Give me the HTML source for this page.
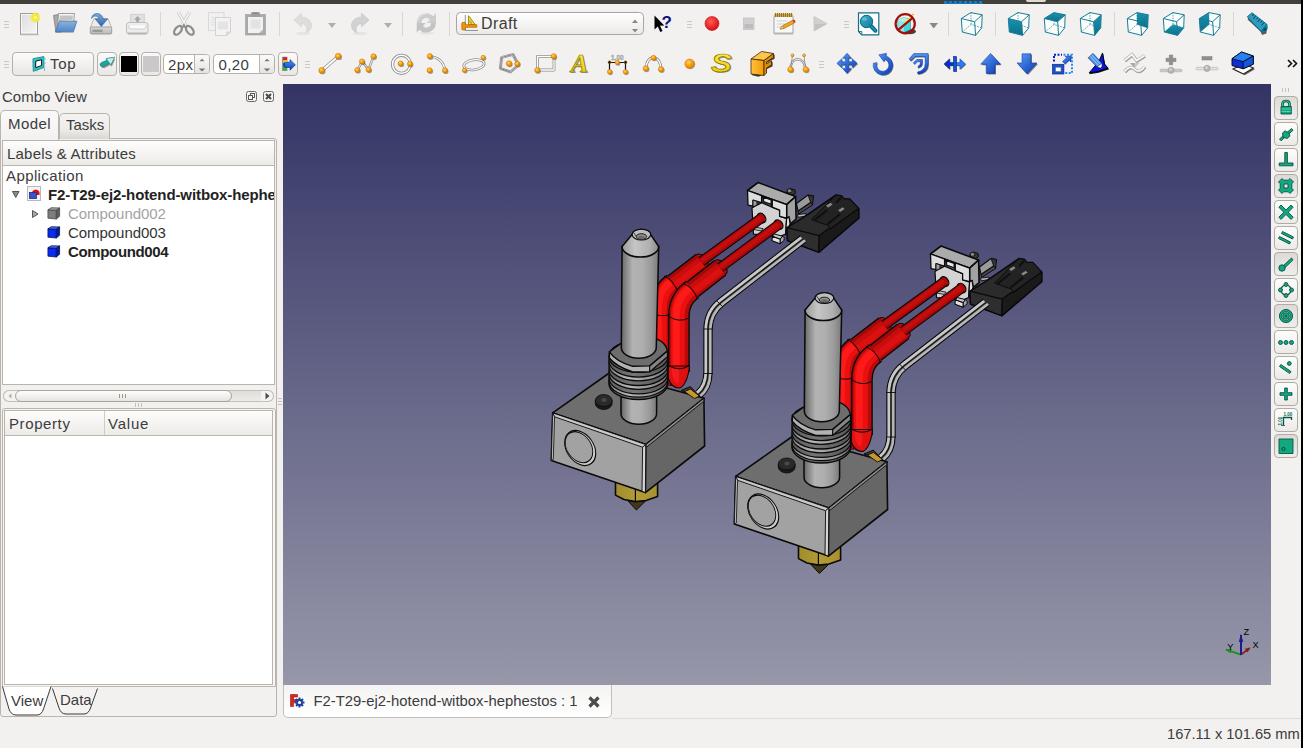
<!DOCTYPE html>
<html lang="en">
<head>
<meta charset="utf-8">
<title>FreeCAD</title>
<style>
html,body{margin:0;padding:0;}
body{width:1303px;height:748px;overflow:hidden;background:#f2f1f0;font-family:"Liberation Sans","DejaVu Sans",sans-serif;font-size:15px;color:#3c3c3c;}
#app{position:relative;width:1303px;height:748px;overflow:hidden;background:#f2f1f0;}
.abs{position:absolute;}
.topbar{left:0;top:0;width:1303px;height:4px;background:#42403b;}
.rightedge{left:1301px;top:0;width:2px;height:748px;background:#000;}
.handle{position:absolute;width:5px;height:9px;background:repeating-linear-gradient(to bottom,#c9c6c1 0,#c9c6c1 1px,transparent 1px,transparent 3px);}
.vsep{position:absolute;width:1px;height:24px;background:#d6d3cf;}
.ico{position:absolute;width:32px;height:32px;overflow:visible;}
.btn{position:absolute;box-sizing:border-box;border:1px solid #b5b0a9;border-radius:4px;background:linear-gradient(#fcfbfb,#e9e7e4);}
.txt{position:absolute;white-space:nowrap;line-height:1;}
</style>
</head>
<body>
<div id="app">
<div class="abs topbar"></div>
<div class="abs" style="left:944px;top:1px;width:39px;height:2px;background:repeating-linear-gradient(to right,#0b7fd0 0,#0b7fd0 3px,#2a4a66 3px,#2a4a66 5px);"></div><div class="abs" style="left:944px;top:3px;width:39px;height:1px;background:#0b86dc;opacity:0.800;"></div>
<div class="abs" style="left:1026px;top:0;width:20px;height:2px;background:#dedad2;border-radius:0 0 2px 2px;"></div>
<!-- ===== toolbar row 1 ===== -->
<svg class="abs" style="left:0;top:0" width="1303" height="46" viewBox="0 0 1303 46">
<defs>
<linearGradient id="gPaper" x1="0" y1="0" x2="1" y2="1"><stop offset="0" stop-color="#dcdcdc"/><stop offset="1" stop-color="#f6f6f6"/></linearGradient>
<radialGradient id="gGlow"><stop offset="0" stop-color="#fffbd0"/><stop offset="0.350" stop-color="#f6ea2e"/><stop offset="0.750" stop-color="#f3e84a" stop-opacity="0.850"/><stop offset="1" stop-color="#f3e84a" stop-opacity="0"/></radialGradient>
<linearGradient id="gFolder" x1="0" y1="0" x2="0" y2="1"><stop offset="0" stop-color="#8db2dc"/><stop offset="1" stop-color="#4f86c6"/></linearGradient>
<linearGradient id="gSaveArrow" x1="0" y1="0" x2="0" y2="1"><stop offset="0" stop-color="#7fa8d8"/><stop offset="1" stop-color="#2f66b0"/></linearGradient>
<linearGradient id="gDrive" x1="0" y1="0" x2="0" y2="1"><stop offset="0" stop-color="#dcdcdc"/><stop offset="1" stop-color="#b4b4b4"/></linearGradient>
<linearGradient id="gCombo" x1="0" y1="0" x2="0" y2="1"><stop offset="0" stop-color="#ffffff"/><stop offset="1" stop-color="#ebe9e7"/></linearGradient>
<radialGradient id="gRed" cx="0.400" cy="0.350" r="0.700"><stop offset="0" stop-color="#ff5a5a"/><stop offset="1" stop-color="#d40c0c"/></radialGradient>
<linearGradient id="gTeal" x1="0" y1="0" x2="1" y2="1"><stop offset="0" stop-color="#3fb0c8"/><stop offset="1" stop-color="#0f7d98"/></linearGradient>
<linearGradient id="gTeal2" x1="0" y1="0" x2="0" y2="1"><stop offset="0" stop-color="#1a93af"/><stop offset="1" stop-color="#0a6f8a"/></linearGradient>
</defs>
<g stroke="#cbc8c3" stroke-width="1"><path d="M4 21.5 h5 M4 24.5 h5 M4 27.5 h5"/></g>
<g transform="translate(17,12)">
<rect x="3" y="22" width="19" height="1.5" fill="#000" opacity="0.120"/>
<rect x="3.500" y="1.500" width="17" height="20.500" fill="url(#gPaper)" stroke="#9b9b9b"/>
<rect x="4.500" y="2.500" width="15" height="18.500" fill="none" stroke="#fff" stroke-opacity="0.700"/>
<circle cx="18.300" cy="5.600" r="5.600" fill="url(#gGlow)"/>
</g>
<g transform="translate(53,12)">
<path d="M0.500 3.500 L5 2.500 L8 20 L3 20 Z" fill="#a9a9a9" stroke="#7d7d7d" stroke-width="0.800"/>
<path d="M5.500 1.500 L21.500 1.500 L20.500 11 L4.500 18 Z" fill="#f4f4f4" stroke="#8a8a8a" stroke-width="0.800"/>
<path d="M7 3.500 L20 3.500 L19.500 8 L6 9 Z" fill="#c4c4c4"/>
<path d="M2.300 19.800 L6.500 9.200 L23.800 9.200 L20.400 19.800 Z" fill="url(#gFolder)" stroke="#3d72b0" stroke-width="0.800"/>
<rect x="2" y="20" width="19" height="1" fill="#000" opacity="0.120"/>
</g>
<g transform="translate(89,12)">
<path d="M1.500 15.500 L5 6.500 L19 6.500 L22.500 15.500 Z" fill="#ededed" stroke="#aaa" stroke-width="0.800"/>
<rect x="1.300" y="15" width="21.400" height="7" rx="1.200" fill="url(#gDrive)" stroke="#8f8f8f" stroke-width="0.800"/>
<rect x="3.500" y="17.500" width="10" height="2.500" fill="#9a9a9a"/>
<path d="M15.500 17 v4 M17.500 17 v4 M19.500 17 v4" stroke="#c9c9c9" stroke-width="1"/>
<path d="M2.500 6.500 C3 0.500 12 -1 14.500 7 L18.500 7 L12.300 14.500 L6.200 7 L10 7 C9 3.500 5 3 2.500 6.500 Z" fill="url(#gSaveArrow)" stroke="#2c62aa" stroke-width="0.600"/>
</g>
<g transform="translate(125,12)">
<rect x="5.700" y="2.300" width="13.500" height="9.500" fill="#e1e1e1" stroke="#c9c9c9" stroke-width="0.800"/>
<path d="M12.500 4 L15.800 7.800 L13.800 7.800 L13.800 10.200 L11.200 10.200 L11.200 7.800 L9.200 7.800 Z" fill="#a5a5a5"/>
<rect x="1.500" y="10.500" width="21.500" height="11.500" rx="2.500" fill="#ececec" stroke="#b8b8b8" stroke-width="0.900"/>
<path d="M3.500 13.500 Q3.500 17 6 17 L18.500 17 Q21 17 21 13.500" fill="#fbfbfb" stroke="#c5c5c5" stroke-width="0.800"/>
<rect x="2.500" y="20.500" width="19.500" height="1.800" rx="0.900" fill="#b3b3b3"/>
</g>
<rect x="160" y="12" width="1" height="24" fill="#dad7d3"/>
<g transform="translate(172,12)">
<path d="M6.300 0.400 L14.800 15 M17.500 0.400 L9 15" stroke="#c9c9c9" stroke-width="3.200" fill="none"/>
<path d="M6.300 0.400 L14.800 15 M17.500 0.400 L9 15" stroke="#f3f3f3" stroke-width="1.700" fill="none"/>
<ellipse cx="6" cy="18.300" rx="3" ry="5" transform="rotate(38 6 18.300)" fill="none" stroke="#8e8e8e" stroke-width="2.300"/>
<ellipse cx="17.800" cy="18.300" rx="3" ry="5" transform="rotate(-38 17.800 18.300)" fill="none" stroke="#8e8e8e" stroke-width="2.300"/>
<path d="M10.500 13.500 L11.900 11 L13.300 13.500 L15.500 17 L11.900 15.500 L8.300 17 Z" fill="#8e8e8e"/>
</g>
<g transform="translate(208,12)">
<rect x="0.500" y="0.500" width="15.500" height="18" fill="#f0f0f0" stroke="#dadada"/>
<path d="M3 5.500 h8 M3 8 h8 M3 10.500 h8 M3 13 h8" stroke="#e2e2e2" stroke-width="1"/>
<path d="M7.500 5.500 L22.500 5.500 L22.500 20 L18.500 23.500 L7.500 23.500 Z" fill="#f3f3f3" stroke="#d2d2d2"/>
<rect x="10" y="9.500" width="10" height="8" fill="#e4e4e4"/>
<path d="M22.500 20 L18.500 20 L18.500 23.500 Z" fill="#e0e0e0" stroke="#d0d0d0" stroke-width="0.700"/>
</g>
<g transform="translate(244,12)">
<rect x="1.500" y="2.500" width="20" height="20.500" fill="#a9a9a9" stroke="#9d9d9d" stroke-width="0.600"/>
<rect x="4" y="5" width="15" height="16" fill="#f1f1f1"/>
<rect x="7" y="0.300" width="9" height="4.700" rx="1" fill="#9e9e9e"/>
<rect x="8.500" y="0.300" width="6" height="1.500" fill="#8a8a8a"/>
<rect x="6.500" y="7.500" width="10" height="9" fill="#e3e3e3"/>
<path d="M19 17.500 L19 21 L15 21 Z" fill="#b5b5b5"/>
</g>
<rect x="279" y="12" width="1" height="24" fill="#dad7d3"/>
<g transform="translate(291,12)">
<ellipse cx="12" cy="21.500" rx="7" ry="1.800" fill="#000" opacity="0.050"/>
<path d="M3 8 L10.500 1.200 L10.500 5.200 C17 5.200 20.500 9 20.500 13.500 C20.500 17.500 17.500 20 15 20.500 C16.500 18.500 16.500 11.800 10.500 11.500 L10.500 14.800 Z" fill="#dddddd" stroke="#d2d2d2" stroke-width="0.700"/>
</g>
<path d="M328 23 h8 l-4 5 z" fill="#b3ada8"/>
<g transform="translate(348,12)">
<ellipse cx="12" cy="21.500" rx="7" ry="1.800" fill="#000" opacity="0.050"/>
<path d="M21 8 L13.500 1.200 L13.500 5.200 C7 5.200 3.500 9 3.500 13.500 C3.500 17.500 6.500 20 9 20.500 C7.500 18.500 7.500 11.800 13.500 11.500 L13.500 14.800 Z" fill="#d2d2d2" stroke="#c6c6c6" stroke-width="0.700"/>
</g>
<path d="M384 23 h8 l-4 5 z" fill="#b3ada8"/>
<rect x="402" y="12" width="1" height="24" fill="#dad7d3"/>
<g transform="translate(414,12)">
<ellipse cx="12.500" cy="21.300" rx="8" ry="1.500" fill="#000" opacity="0.050"/>
<path d="M5.200 11.300 A7.100 7.100 0 0 1 18.100 6.700" fill="none" stroke="#cdcdcd" stroke-width="4.800"/>
<path d="M22 1.200 L22 11 L12.800 11 Z" fill="#cdcdcd"/>
<path d="M19.400 10.500 A7.100 7.100 0 0 1 6.500 15" fill="none" stroke="#c4c4c4" stroke-width="4.800"/>
<path d="M2.700 20.800 L2.700 11 L11.800 11 Z" fill="#c4c4c4"/>
<path d="M4.200 8.500 A8.500 8.500 0 0 1 13 2" fill="none" stroke="#e4e4e4" stroke-width="1"/>
</g>
<rect x="449" y="12" width="1" height="24" fill="#dad7d3"/>
<rect x="456.500" y="12.500" width="187" height="22" rx="4" fill="url(#gCombo)" stroke="#aaa69f"/>
<g transform="translate(461,14)">
<path d="M4.300 1 L4.300 16.500 L17 16.500" stroke="#8a8a8a" stroke-width="0.900" fill="none"/>
<path d="M7.500 1.700 L7.500 10.500 L14.200 10.500 Z" fill="#f0de3a" stroke="#9a8400" stroke-width="0.900" stroke-linejoin="round"/>
<path d="M9 6.500 L9 9.200 L11 9.200 Z" fill="#cfc9a0" stroke="#9a8400" stroke-width="0.500"/>
<path d="M1.800 8.400 Q0.800 8.400 0.800 9.400 L0.800 14.900 Q0.800 15.900 1.800 15.900 L4.300 15.900 L4.300 13.300 L15.800 13.300 L15.800 10.700 L4.300 10.700 L4.300 8.400 Z" fill="#f0950c" stroke="#b36200" stroke-width="0.700" stroke-linejoin="round"/>
</g>
<path d="M632 23 h6 l-3 -3.500 z M632 29 h6 l-3 3.500 z" fill="#8b8782"/>
<g transform="translate(651,12)">
<path d="M3.500 3.500 L3.500 17.500 L6.800 14.500 L9.300 20 L11.500 19 L9 13.700 L13.300 13.500 Z" fill="#000"/>
<text x="10.500" y="16" font-family="Liberation Sans, sans-serif" font-weight="bold" font-size="17" fill="#10107e">?</text>
</g>
<g stroke="#cbc8c3" stroke-width="1"><path d="M687 21.5 h5 M687 24.5 h5 M687 27.5 h5"/></g>
<circle cx="712" cy="23.500" r="7" fill="url(#gRed)" stroke="#c61010" stroke-width="0.600"/>
<rect x="743.500" y="18" width="10.500" height="11.500" fill="#d0d0d0" stroke="#c3c3c3" stroke-width="0.800"/><rect x="744.500" y="24" width="8.500" height="4.500" fill="#bcbcbc"/>
<g transform="translate(772,12)">
<rect x="2" y="3.500" width="19" height="18" rx="1" fill="#f7f7f7" stroke="#9a9a9a" stroke-width="0.900"/>
<rect x="1.500" y="20.500" width="20" height="2" rx="1" fill="#b4b4b4"/>
<rect x="2.500" y="1.500" width="18" height="3.500" fill="#c9a94a"/>
<path d="M3.500 1 v4 M5.500 1 v4 M7.500 1 v4 M9.500 1 v4 M11.500 1 v4 M13.500 1 v4 M15.500 1 v4 M17.500 1 v4 M19.500 1 v4" stroke="#8a6d1d" stroke-width="0.900"/>
<path d="M4.500 9 h11 M4.500 12 h9 M4.500 15 h5" stroke="#cfcfcf" stroke-width="1"/>
<path d="M8 17 L10.500 13.800 L20.500 8.300 L22.300 11 L12 16.500 Z" fill="#f0a51c" stroke="#b36e00" stroke-width="0.700"/>
<path d="M8 17 L10.500 13.800 L12 16.500 Z" fill="#f3d6a0" stroke="#9a6a20" stroke-width="0.500"/>
<path d="M20.500 8.300 L22 7.600 Q23.500 8.500 23.500 10.200 L22.300 11 Z" fill="#e03030"/>
</g>
<path d="M814 16.500 L827 23.700 L814 31 Z" fill="#d0d0d0" stroke="#c2c2c2" stroke-width="0.800"/><path d="M815 24 L826 24 L815 30 Z" fill="#c2c2c2"/>
<g stroke="#cbc8c3" stroke-width="1"><path d="M844 21.5 h5 M844 24.5 h5 M844 27.5 h5"/></g>
<g transform="translate(856,12)">
<path d="M2.500 0.800 L22.800 0.800 L22.800 22.800 L5.800 22.800 L2.500 19.500 Z" fill="#fdfdfd" stroke="#136f88" stroke-width="1.200" stroke-linejoin="round"/>
<path d="M2.500 19.500 L5.800 19.500 L5.800 22.800" fill="none" stroke="#136f88" stroke-width="0.900"/>
<path d="M15 14 L19.300 18.600" stroke="#0b6580" stroke-width="4.200" stroke-linecap="round"/>
<path d="M15.200 14.200 L19.200 18.500" stroke="#1a8fae" stroke-width="2.200" stroke-linecap="round"/>
<circle cx="10.500" cy="9.500" r="6.200" fill="url(#gTeal)" stroke="#0b6580" stroke-width="1"/>
<ellipse cx="8.600" cy="7" rx="2.600" ry="1.700" fill="#9fe0f0" opacity="0.450"/>
</g>
<g transform="translate(893,12)">
<ellipse cx="16.500" cy="19.500" rx="6.500" ry="2.800" fill="#222" opacity="0.850"/>
<path d="M4.500 8.500 L10.500 5.500 L17.500 7.500 L17.500 17.500 L11 20.500 L4.500 17.500 Z" fill="#3fd6dc" stroke="#1f9aa4" stroke-width="0.600"/>
<path d="M4.500 8.500 L10.500 5.500 L17.500 7.500 L11 10.800 Z" fill="#b4efee"/>
<path d="M4.500 8.500 L11 10.800 L11 20.500 L4.500 17.500 Z" fill="#8fe4e4"/>
<path d="M11.500 11 L18.800 4.800" stroke="#f3dc1a" stroke-width="1.700"/>
<circle cx="20" cy="2.600" r="0.900" fill="#f0a010"/>
<circle cx="12.200" cy="11.800" r="9.600" fill="none" stroke="#a50d0d" stroke-width="2.200"/>
<path d="M5 18.200 L19.500 6" stroke="#a50d0d" stroke-width="2.200"/>
</g>
<path d="M929.500 23 h8.500 l-4.250 5.500 z" fill="#8a8682"/>
<rect x="948" y="12" width="1" height="24" fill="#dad7d3"/>
<g transform="translate(960,12)" stroke-linejoin="round"><path d="M1.3 6.5 L10.9 0.6 L22.2 2.8 L21.7 15.9 L15.6 23.4 L2.3 20.0 Z" fill="#fbfdfd"/><path d="M10.9 0.6 L11.1 12.4 M2.3 20.0 L11.1 12.4 L21.7 15.9" stroke="#1a829c" stroke-width="0.800" stroke-dasharray="1.400 1.200" fill="none"/><path d="M1.3 6.5 L10.9 0.6 L22.2 2.8 L14.6 9.7 Z M1.3 6.5 L2.3 20.0 L15.6 23.4 L14.6 9.7 M15.6 23.4 L21.7 15.9 L22.2 2.8" stroke="#197d95" stroke-width="1" fill="none"/></g>
<rect x="995" y="12" width="1" height="24" fill="#dad7d3"/>
<g transform="translate(1007,12)" stroke-linejoin="round"><path d="M1.3 6.5 L10.9 0.6 L22.2 2.8 L21.7 15.9 L15.6 23.4 L2.3 20.0 Z" fill="#fbfdfd"/><path d="M1.3 6.5 L14.6 9.7 L15.6 23.4 L2.3 20.0 Z" fill="url(#gTeal2)"/><path d="M10.9 0.6 L11.1 12.4 M2.3 20.0 L11.1 12.4 L21.7 15.9" stroke="#1a829c" stroke-width="0.800" stroke-dasharray="1.400 1.200" fill="none"/><path d="M1.3 6.5 L10.9 0.6 L22.2 2.8 L14.6 9.7 Z M1.3 6.5 L2.3 20.0 L15.6 23.4 L14.6 9.7 M15.6 23.4 L21.7 15.9 L22.2 2.8" stroke="#197d95" stroke-width="1" fill="none"/></g>
<g transform="translate(1043,12)" stroke-linejoin="round"><path d="M1.3 6.5 L10.9 0.6 L22.2 2.8 L21.7 15.9 L15.6 23.4 L2.3 20.0 Z" fill="#fbfdfd"/><path d="M1.3 6.5 L10.9 0.6 L22.2 2.8 L14.6 9.7 Z" fill="url(#gTeal2)"/><path d="M10.9 0.6 L11.1 12.4 M2.3 20.0 L11.1 12.4 L21.7 15.9" stroke="#1a829c" stroke-width="0.800" stroke-dasharray="1.400 1.200" fill="none"/><path d="M1.3 6.5 L10.9 0.6 L22.2 2.8 L14.6 9.7 Z M1.3 6.5 L2.3 20.0 L15.6 23.4 L14.6 9.7 M15.6 23.4 L21.7 15.9 L22.2 2.8" stroke="#197d95" stroke-width="1" fill="none"/></g>
<g transform="translate(1079,12)" stroke-linejoin="round"><path d="M1.3 6.5 L10.9 0.6 L22.2 2.8 L21.7 15.9 L15.6 23.4 L2.3 20.0 Z" fill="#fbfdfd"/><path d="M14.6 9.7 L22.2 2.8 L21.7 15.9 L15.6 23.4 Z" fill="url(#gTeal2)"/><path d="M10.9 0.6 L11.1 12.4 M2.3 20.0 L11.1 12.4 L21.7 15.9" stroke="#1a829c" stroke-width="0.800" stroke-dasharray="1.400 1.200" fill="none"/><path d="M1.3 6.5 L10.9 0.6 L22.2 2.8 L14.6 9.7 Z M1.3 6.5 L2.3 20.0 L15.6 23.4 L14.6 9.7 M15.6 23.4 L21.7 15.9 L22.2 2.8" stroke="#197d95" stroke-width="1" fill="none"/></g>
<rect x="1114" y="12" width="1" height="24" fill="#dad7d3"/>
<g transform="translate(1126,12)" stroke-linejoin="round"><path d="M1.3 6.5 L10.9 0.6 L22.2 2.8 L21.7 15.9 L15.6 23.4 L2.3 20.0 Z" fill="#fbfdfd"/><path d="M10.9 0.6 L22.2 2.8 L21.7 15.9 L11.1 12.4 Z" fill="url(#gTeal2)"/><path d="M10.9 0.6 L11.1 12.4 M2.3 20.0 L11.1 12.4 L21.7 15.9" stroke="#1a829c" stroke-width="0.800" stroke-dasharray="1.400 1.200" fill="none"/><path d="M1.3 6.5 L10.9 0.6 L22.2 2.8 L14.6 9.7 Z M1.3 6.5 L2.3 20.0 L15.6 23.4 L14.6 9.7 M15.6 23.4 L21.7 15.9 L22.2 2.8" stroke="#197d95" stroke-width="1" fill="none"/></g>
<g transform="translate(1162,12)" stroke-linejoin="round"><path d="M1.3 6.5 L10.9 0.6 L22.2 2.8 L21.7 15.9 L15.6 23.4 L2.3 20.0 Z" fill="#fbfdfd"/><path d="M2.3 20.0 L11.1 12.4 L21.7 15.9 L15.6 23.4 Z" fill="url(#gTeal2)"/><path d="M10.9 0.6 L11.1 12.4 M2.3 20.0 L11.1 12.4 L21.7 15.9" stroke="#1a829c" stroke-width="0.800" stroke-dasharray="1.400 1.200" fill="none"/><path d="M1.3 6.5 L10.9 0.6 L22.2 2.8 L14.6 9.7 Z M1.3 6.5 L2.3 20.0 L15.6 23.4 L14.6 9.7 M15.6 23.4 L21.7 15.9 L22.2 2.8" stroke="#197d95" stroke-width="1" fill="none"/></g>
<g transform="translate(1198,12)" stroke-linejoin="round"><path d="M1.3 6.5 L10.9 0.6 L22.2 2.8 L21.7 15.9 L15.6 23.4 L2.3 20.0 Z" fill="#fbfdfd"/><path d="M1.3 6.5 L10.9 0.6 L11.1 12.4 L2.3 20.0 Z" fill="url(#gTeal2)"/><path d="M10.9 0.6 L11.1 12.4 M2.3 20.0 L11.1 12.4 L21.7 15.9" stroke="#1a829c" stroke-width="0.800" stroke-dasharray="1.400 1.200" fill="none"/><path d="M1.3 6.5 L10.9 0.6 L22.2 2.8 L14.6 9.7 Z M1.3 6.5 L2.3 20.0 L15.6 23.4 L14.6 9.7 M15.6 23.4 L21.7 15.9 L22.2 2.8" stroke="#197d95" stroke-width="1" fill="none"/></g>
<rect x="1233" y="12" width="1" height="24" fill="#dad7d3"/>
<g transform="translate(1245,12)">
<path d="M2.500 7.500 L15.500 19.500 L17 23 L21.500 21.500 L21.500 16 L4 5 Z" fill="#3a3a3a" opacity="0.800"/>
<path d="M2.300 4.800 L7 0.700 L21.800 12.300 L16.200 19.600 Z" fill="#2a9cc0" stroke="#0e6a88" stroke-width="0.900"/>
<path d="M21.800 12.300 Q23.600 16.500 20 20.800 L16.200 19.600 Z" fill="#1b86a6" stroke="#0e6a88" stroke-width="0.800"/>
<ellipse cx="19.800" cy="17.500" rx="1.300" ry="2" transform="rotate(35 19.800 17.500)" fill="#0a4c62"/>
<path d="M8.600 2.200 l-1.400 1.800 M10.700 3.800 l-2.300 3 M12.800 5.500 l-1.400 1.800 M14.900 7.100 l-2.300 3 M17 8.800 l-1.400 1.800 M19.100 10.400 l-2.300 3" stroke="#05384a" stroke-width="0.900"/>
</g>
</svg>
<div class="txt" style="left:481px;top:16px;font-size:16px;letter-spacing:0.400px;">Draft</div>
<!-- ===== toolbar row 2 ===== -->
<div class="btn" style="left:12px;top:52px;width:82px;height:24px;"></div>
<div class="txt" style="left:50px;top:56px;font-size:15px;letter-spacing:0.700px;">Top</div>
<div class="btn" style="left:97px;top:52px;width:20px;height:24px;"></div>
<div class="btn" style="left:119px;top:52px;width:20px;height:24px;"></div>
<div class="abs" style="left:121px;top:56px;width:16px;height:16px;background:#000;"></div>
<div class="btn" style="left:141px;top:52px;width:20px;height:24px;"></div>
<div class="abs" style="left:143px;top:56px;width:16px;height:16px;background:#c9c9c9;"></div>
<div class="abs" style="left:163px;top:54px;width:47px;height:20px;box-sizing:border-box;border:1px solid #b5b0a9;border-radius:4px;background:linear-gradient(to right,#fff 30px,#bab6af 30px,#bab6af 31px,#f7f6f5 31px);overflow:hidden;"><div class="abs" style="left:31px;top:0;width:14px;height:18px;background:linear-gradient(#fbfafa,#e6e4e1);"></div></div>
<div class="txt" style="left:168px;top:57px;font-size:15px;letter-spacing:0.400px;color:#3c3c3c;">2px</div>
<svg class="abs" style="left:194px;top:55px" width="16" height="18" viewBox="0 0 16 18"><path d="M5.5 6.300 h5 l-2.500 -2.600 z" fill="#77746f"/><path d="M4.8 13.400 h6.400 l-3.200 3 z" fill="#77746f"/></svg>
<div class="abs" style="left:213px;top:54px;width:62px;height:20px;box-sizing:border-box;border:1px solid #b5b0a9;border-radius:4px;background:linear-gradient(to right,#fff 45px,#bab6af 45px,#bab6af 46px,#f7f6f5 46px);overflow:hidden;"><div class="abs" style="left:46px;top:0;width:14px;height:18px;background:linear-gradient(#fbfafa,#e6e4e1);"></div></div>
<div class="txt" style="left:218.5px;top:57px;font-size:15px;letter-spacing:0.400px;color:#3c3c3c;">0,20</div>
<svg class="abs" style="left:259px;top:55px" width="16" height="18" viewBox="0 0 16 18"><path d="M5.5 6.300 h5 l-2.500 -2.600 z" fill="#77746f"/><path d="M4.8 13.400 h6.400 l-3.200 3 z" fill="#77746f"/></svg>
<div class="btn" style="left:278px;top:52px;width:20px;height:24px;"></div>
<svg class="abs" style="left:0;top:44px" width="1303" height="42" viewBox="0 44 1303 42">
<defs>
<radialGradient id="gOr" cx="0.400" cy="0.350" r="0.750"><stop offset="0" stop-color="#ffd070"/><stop offset="0.450" stop-color="#f9a30e"/><stop offset="1" stop-color="#c87400"/></radialGradient>
<linearGradient id="gBlue" x1="0" y1="0" x2="0" y2="1"><stop offset="0" stop-color="#4f96f0"/><stop offset="1" stop-color="#0a3fc0"/></linearGradient>
<linearGradient id="gBlue2" x1="0" y1="0" x2="1" y2="1"><stop offset="0" stop-color="#5aa0ff"/><stop offset="1" stop-color="#0838b0"/></linearGradient>
<linearGradient id="gYel" x1="0" y1="0" x2="0" y2="1"><stop offset="0" stop-color="#fff04a"/><stop offset="1" stop-color="#e8c800"/></linearGradient>
<linearGradient id="gOrBox" x1="0" y1="0" x2="1" y2="0"><stop offset="0" stop-color="#ffc23a"/><stop offset="1" stop-color="#f39a0a"/></linearGradient>
</defs>
<g stroke="#cbc8c3" stroke-width="1"><path d="M4 61.5 h5 M4 64.5 h5 M4 67.5 h5"/></g>
<g>
<path d="M33 58.700 L43.900 56.600 L43.900 67.500 L33.300 71.300 Z" fill="#35c3c8" stroke="#168a92" stroke-width="0.900"/>
<path d="M35.700 61.200 L41.600 59.700 L41.600 65.500 L35.700 67.700 Z" fill="#fff" stroke="#111" stroke-width="1"/>
<path d="M32 62 h2 M32 66 h2 M44.500 59 h1.500 M44.500 63 h1.500 M44.500 67.500 v3.500 M37 69.500 v2" stroke="#35b3b8" stroke-width="0.700"/>
</g>
<g>
<path d="M100.500 66.500 L102 63.500 L107.500 61.200 L106.500 59.300 L114.500 58.300 L111 65.800 L109.800 64 L103.500 67.300 Z" fill="#333" opacity="0.500" transform="translate(0.700,0.900)"/>
<path d="M100 65 Q99.600 63.500 101.500 62.500 L107 60.200 L106.300 58.600 L114.600 57.300 L110.800 64.800 L109.600 63.200 L103.500 66.300 Q101 67.200 100 65 Z" fill="#17a8a4" stroke="#0a7370" stroke-width="0.600"/>
<path d="M106.300 58.600 L114.600 57.300 L110.800 64.800 Z" fill="#c6efe8" stroke="#3a9a90" stroke-width="0.600"/>
</g>
<g>
<rect x="282.300" y="56.800" width="5" height="14" fill="#6e6e6e"/>
<rect x="283.300" y="57.600" width="3.600" height="2.600" fill="#ff1010"/>
<rect x="283.300" y="60.200" width="3.600" height="2.800" fill="#ffe610"/>
<rect x="283.300" y="63" width="3.600" height="3.400" fill="#1540e0"/>
<rect x="283.300" y="66.400" width="3.600" height="3.400" fill="#18d818"/>
<path d="M284.500 62.300 L290 62.300 L290 59.600 L295.400 64.900 L290 70.200 L290 67.500 L284.500 67.500 Z" fill="url(#gBlue)" stroke="#0a2c90" stroke-width="0.600"/>
</g>
<g stroke="#cbc8c3" stroke-width="1"><path d="M305 61.5 h5 M305 64.5 h5 M305 67.5 h5"/></g>
<g><path d="M322 70.500 L338 56.500" stroke="#8c8c8c" stroke-width="3.4" fill="none" stroke-linecap="round" stroke-linejoin="round"/><path d="M322 70.500 L338 56.500" stroke="#ffffff" stroke-width="1.9" fill="none" stroke-linecap="round" stroke-linejoin="round"/><circle cx="322.59999999999997" cy="71.4" r="2.9" fill="#555" opacity="0.550"/><circle cx="321.7" cy="70.4" r="2.9" fill="url(#gOr)" stroke="#c77a00" stroke-width="0.500"/><circle cx="339.09999999999997" cy="57.2" r="2.9" fill="#555" opacity="0.550"/><circle cx="338.2" cy="56.2" r="2.9" fill="url(#gOr)" stroke="#c77a00" stroke-width="0.500"/></g>
<g><path d="M357.500 70 L362 61.500 L368.500 69.500 L373.500 56.500" stroke="#8c8c8c" stroke-width="2.4" fill="none" stroke-linecap="round" stroke-linejoin="round"/><path d="M357.500 70 L362 61.500 L368.500 69.500 L373.500 56.500" stroke="#ffffff" stroke-width="0.8999999999999999" fill="none" stroke-linecap="round" stroke-linejoin="round"/><circle cx="358.2" cy="71.0" r="2.6" fill="#555" opacity="0.550"/><circle cx="357.3" cy="70" r="2.6" fill="url(#gOr)" stroke="#c77a00" stroke-width="0.500"/><circle cx="362.9" cy="62.5" r="2.6" fill="#555" opacity="0.550"/><circle cx="362" cy="61.5" r="2.6" fill="url(#gOr)" stroke="#c77a00" stroke-width="0.500"/><circle cx="369.4" cy="70.6" r="2.6" fill="#555" opacity="0.550"/><circle cx="368.5" cy="69.6" r="2.6" fill="url(#gOr)" stroke="#c77a00" stroke-width="0.500"/><circle cx="374.4" cy="57.3" r="2.6" fill="#555" opacity="0.550"/><circle cx="373.5" cy="56.3" r="2.6" fill="url(#gOr)" stroke="#c77a00" stroke-width="0.500"/></g>
<g><circle cx="401.500" cy="64.300" r="9" fill="none" stroke="#8f8f8f" stroke-width="3.200"/><circle cx="401.500" cy="64.300" r="9" fill="none" stroke="#fff" stroke-width="1.500"/><circle cx="401.5" cy="64.5" r="2.6" fill="#555" opacity="0.550"/><circle cx="400.6" cy="63.5" r="2.6" fill="url(#gOr)" stroke="#c77a00" stroke-width="0.500"/><circle cx="410.9" cy="64.8" r="2.6" fill="#555" opacity="0.550"/><circle cx="410" cy="63.8" r="2.6" fill="url(#gOr)" stroke="#c77a00" stroke-width="0.500"/></g>
<g><path d="M430 56.500 C438 57 444 62 445 70.500" stroke="#8c8c8c" stroke-width="2.6" fill="none" stroke-linecap="round" stroke-linejoin="round"/><path d="M430 56.500 C438 57 444 62 445 70.500" stroke="#ffffff" stroke-width="1.1" fill="none" stroke-linecap="round" stroke-linejoin="round"/><circle cx="430.7" cy="57.2" r="2.6" fill="#555" opacity="0.550"/><circle cx="429.8" cy="56.2" r="2.6" fill="url(#gOr)" stroke="#c77a00" stroke-width="0.500"/><circle cx="430.5" cy="71.3" r="2.6" fill="#555" opacity="0.550"/><circle cx="429.6" cy="70.3" r="2.6" fill="url(#gOr)" stroke="#c77a00" stroke-width="0.500"/><circle cx="445.9" cy="71.4" r="2.6" fill="#555" opacity="0.550"/><circle cx="445" cy="70.4" r="2.6" fill="url(#gOr)" stroke="#c77a00" stroke-width="0.500"/></g>
<g><ellipse cx="474" cy="64.800" rx="10.300" ry="5" transform="rotate(-8 474 64.800)" fill="none" stroke="#8c8c8c" stroke-width="2.600"/><ellipse cx="474" cy="64.800" rx="10.300" ry="5" transform="rotate(-8 474 64.800)" fill="none" stroke="#fff" stroke-width="1.100"/><circle cx="465.4" cy="71.3" r="2.2" fill="#555" opacity="0.550"/><circle cx="464.5" cy="70.3" r="2.2" fill="url(#gOr)" stroke="#c77a00" stroke-width="0.500"/><circle cx="484.09999999999997" cy="58.5" r="2.2" fill="#555" opacity="0.550"/><circle cx="483.2" cy="57.5" r="2.2" fill="url(#gOr)" stroke="#c77a00" stroke-width="0.500"/></g>
<g><path d="M501.500 57.500 L513 54.500 L518.500 65 L510.500 72 L500.500 68.500 Z" stroke="#8c8c8c" stroke-width="2.8" fill="none" stroke-linecap="round" stroke-linejoin="round"/><path d="M501.500 57.500 L513 54.500 L518.500 65 L510.500 72 L500.500 68.500 Z" stroke="#ffffff" stroke-width="1.2999999999999998" fill="none" stroke-linecap="round" stroke-linejoin="round"/><path d="M501.500 57.500 L513 54.500 L518.500 65 L510.500 72 L500.500 68.500 Z" fill="none" stroke="#444" stroke-width="0.700"/><circle cx="509.9" cy="64.5" r="2.8" fill="#555" opacity="0.550"/><circle cx="509" cy="63.5" r="2.8" fill="url(#gOr)" stroke="#c77a00" stroke-width="0.500"/><circle cx="518.1999999999999" cy="64.8" r="2.6" fill="#555" opacity="0.550"/><circle cx="517.3" cy="63.8" r="2.6" fill="url(#gOr)" stroke="#c77a00" stroke-width="0.500"/></g>
<g><path d="M537.500 70 L537.500 56.500 L554 56.500 L554 70 Z" stroke="#8c8c8c" stroke-width="2.8" fill="none" stroke-linecap="round" stroke-linejoin="round"/><path d="M537.500 70 L537.500 56.500 L554 56.500 L554 70 Z" stroke="#ffffff" stroke-width="1.2999999999999998" fill="none" stroke-linecap="round" stroke-linejoin="round"/><circle cx="538.1999999999999" cy="71.2" r="2.6" fill="#555" opacity="0.550"/><circle cx="537.3" cy="70.2" r="2.6" fill="url(#gOr)" stroke="#c77a00" stroke-width="0.500"/><circle cx="554.6" cy="57.3" r="2.6" fill="#555" opacity="0.550"/><circle cx="553.7" cy="56.3" r="2.6" fill="url(#gOr)" stroke="#c77a00" stroke-width="0.500"/></g>
<g><text x="571.800" y="73" font-family="Liberation Serif, serif" font-style="italic" font-weight="bold" font-size="26" fill="#555" opacity="0.600">A</text><text x="571" y="72" font-family="Liberation Serif, serif" font-style="italic" font-weight="bold" font-size="26" fill="url(#gYel)" stroke="#8a7400" stroke-width="0.700">A</text></g>
<g><path d="M609.500 62 L609.500 72 M625.500 62 L625.500 72 M609.500 62.500 L625.500 62.500" stroke="#111" stroke-width="1.200" fill="none"/><text x="611" y="59.500" font-family="Liberation Sans, sans-serif" font-weight="bold" font-size="6.500" fill="#fff" stroke="#999" stroke-width="0.500">1.00</text><circle cx="609.5" cy="62.2" r="1.5" fill="#111" stroke="#c77a00" stroke-width="0.500"/><circle cx="625.5" cy="62.2" r="1.5" fill="#111" stroke="#c77a00" stroke-width="0.500"/><circle cx="618.1999999999999" cy="63.5" r="2.3" fill="#555" opacity="0.550"/><circle cx="617.3" cy="62.5" r="2.3" fill="url(#gOr)" stroke="#c77a00" stroke-width="0.500"/><circle cx="610.6" cy="72.8" r="2.4" fill="#555" opacity="0.550"/><circle cx="609.7" cy="71.8" r="2.4" fill="url(#gOr)" stroke="#c77a00" stroke-width="0.500"/><circle cx="626.4" cy="72.8" r="2.4" fill="#555" opacity="0.550"/><circle cx="625.5" cy="71.8" r="2.4" fill="url(#gOr)" stroke="#c77a00" stroke-width="0.500"/></g>
<g><path d="M646 68.500 C646 54 661 54 661 69" stroke="#8c8c8c" stroke-width="2.8" fill="none" stroke-linecap="round" stroke-linejoin="round"/><path d="M646 68.500 C646 54 661 54 661 69" stroke="#ffffff" stroke-width="1.2999999999999998" fill="none" stroke-linecap="round" stroke-linejoin="round"/><circle cx="654.4" cy="58.8" r="2.5" fill="#555" opacity="0.550"/><circle cx="653.5" cy="57.8" r="2.5" fill="url(#gOr)" stroke="#c77a00" stroke-width="0.500"/><circle cx="646.6999999999999" cy="69.5" r="2.7" fill="#555" opacity="0.550"/><circle cx="645.8" cy="68.5" r="2.7" fill="url(#gOr)" stroke="#c77a00" stroke-width="0.500"/><circle cx="661.9" cy="70.3" r="2.7" fill="#555" opacity="0.550"/><circle cx="661" cy="69.3" r="2.7" fill="url(#gOr)" stroke="#c77a00" stroke-width="0.500"/></g>
<g><circle cx="690.600" cy="64.600" r="4.600" fill="#555" opacity="0.450"/><circle cx="689.600" cy="63.800" r="4.800" fill="url(#gOr)" stroke="#c77a00" stroke-width="0.500"/></g>
<g><text x="714.800" y="73" font-family="Liberation Sans, sans-serif" font-style="italic" font-weight="bold" font-size="25" fill="#555" opacity="0.600" transform="translate(726 64) scale(1.250 1) translate(-726 -64)">S</text><text x="714" y="72" font-family="Liberation Sans, sans-serif" font-style="italic" font-weight="bold" font-size="25" fill="url(#gYel)" stroke="#8a7400" stroke-width="0.700" transform="translate(726 64) scale(1.250 1) translate(-726 -64)">S</text></g>
<g>
<path d="M751.500 59.500 L762 52 L774 54 L774 58 L766 62 L766 63.500 L772 61 L772 65.500 L766 68.500 L766 72 L758 76 L751.500 74.500 Z" fill="#3a3a3a" transform="translate(0.600,0.700)"/>
<path d="M751 59 L761.500 51.500 L773.500 53.500 L764 60.500 Z" fill="#ffc44a" stroke="#3a2c08" stroke-width="0.800" stroke-linejoin="round"/>
<path d="M751 59 L764 60.500 L764 75.500 L751 74 Z" fill="url(#gOrBox)" stroke="#3a2c08" stroke-width="0.800" stroke-linejoin="round"/>
<path d="M764 60.500 L773.500 53.500 L773.500 57.500 L766.500 62 L766.500 63.800 L771.500 60.800 L771.500 65 L766.500 68 L766.500 73 L764 75.500 Z" fill="#e58a04" stroke="#3a2c08" stroke-width="0.800" stroke-linejoin="round"/>
</g>
<g><path d="M790.500 69 C790.500 56 804.500 56 805.500 69" stroke="#8c8c8c" stroke-width="2.4" fill="none" stroke-linecap="round" stroke-linejoin="round"/><path d="M790.500 69 C790.500 56 804.500 56 805.500 69" stroke="#ffffff" stroke-width="0.8999999999999999" fill="none" stroke-linecap="round" stroke-linejoin="round"/><path d="M790.500 69 L792.500 55.500 M805.500 69 L804 55.500" stroke="#777" stroke-width="0.700"/><circle cx="792.5" cy="55.3" r="1.5" fill="url(#gOr)" stroke="#c77a00" stroke-width="0.500"/><circle cx="804" cy="55.3" r="1.5" fill="url(#gOr)" stroke="#c77a00" stroke-width="0.500"/><circle cx="791.4" cy="70.5" r="2.8" fill="#555" opacity="0.550"/><circle cx="790.5" cy="69.5" r="2.8" fill="url(#gOr)" stroke="#c77a00" stroke-width="0.500"/><circle cx="806.6999999999999" cy="70.5" r="2.8" fill="#555" opacity="0.550"/><circle cx="805.8" cy="69.5" r="2.8" fill="url(#gOr)" stroke="#c77a00" stroke-width="0.500"/></g>
<g stroke="#cbc8c3" stroke-width="1"><path d="M819 61.5 h5 M819 64.5 h5 M819 67.5 h5"/></g>
<g><path d="M847 53.200 L851.500 58.200 L848.600 58.200 L848.600 61.700 L852.200 61.700 L852.200 58.800 L857.200 63.300 L852.200 67.800 L852.200 64.900 L848.600 64.900 L848.600 68.400 L851.500 68.400 L847 73.400 L842.500 68.400 L845.400 68.400 L845.400 64.900 L841.800 64.900 L841.800 67.800 L836.800 63.300 L841.800 58.800 L841.800 61.700 L845.400 61.700 L845.400 58.200 L842.500 58.200 Z" fill="#333" opacity="0.600" transform="translate(0.800,0.900)"/><path d="M847 53.200 L851.500 58.200 L848.600 58.200 L848.600 61.700 L852.200 61.700 L852.200 58.800 L857.200 63.300 L852.200 67.800 L852.200 64.900 L848.600 64.900 L848.600 68.400 L851.500 68.400 L847 73.400 L842.500 68.400 L845.400 68.400 L845.400 64.900 L841.800 64.900 L841.800 67.800 L836.800 63.300 L841.800 58.800 L841.800 61.700 L845.400 61.700 L845.400 58.200 L842.500 58.200 Z" fill="url(#gBlue2)" stroke="#1848b8" stroke-width="0.500"/></g>
<g><path d="M873.300 63.200 A9.800 9.800 0 1 0 885.500 55.700 L886.500 53.300 L878.800 54.800 L883.800 61.500 L884.600 59.200 A6.200 6.200 0 1 1 877 62.600 Z" fill="#333" opacity="0.600" transform="translate(0.800,0.900)"/><path d="M873.300 63.200 A9.800 9.800 0 1 0 885.500 55.700 L886.500 53.300 L878.800 54.800 L883.800 61.500 L884.600 59.200 A6.200 6.200 0 1 1 877 62.600 Z" fill="url(#gBlue2)" stroke="#1040b0" stroke-width="0.500"/></g>
<g><path d="M909.200 58.700 L913.800 53.600 L928.200 53.600 L928.200 64 Q928.200 72.500 918 74.200 L917.500 72 Q925.200 70.500 925.200 63.500 L925.200 56.600 L915 56.600 L910.800 61 Z" fill="#333" opacity="0.600" transform="translate(0.700,0.800)"/><path d="M909.200 58.700 L913.800 53.600 L928.200 53.600 L928.200 64 Q928.200 72.500 918 74.200 L917.500 72 Q925.200 70.500 925.200 63.500 L925.200 56.600 L915 56.600 L910.800 61 Z" fill="url(#gBlue)" stroke="#0a2a90" stroke-width="0.500"/><path d="M913.200 62.800 L916.800 59.500 L922.500 59.500 L922.500 63.500 Q922.500 67.300 918.500 68.300 L918 66.300 Q920.300 65.500 920.300 63.300 L920.300 61.700 L917.600 61.700 L914.800 64.500 Z" fill="url(#gBlue2)" stroke="#0a2a90" stroke-width="0.500"/></g>
<g><path d="M953.300 56.300 h3 v15 h-3 z M944 64 L949.600 58.800 L949.600 62.500 L953 62.500 L953 65.500 L949.600 65.500 L949.600 69.200 Z M965.500 64 L959.900 58.800 L959.900 62.500 L956.500 62.500 L956.500 65.500 L959.900 65.500 L959.900 69.200 Z" fill="#333" opacity="0.600" transform="translate(0.700,0.800)"/><path d="M944 64 L949.600 58.800 L949.600 62.500 L953.500 62.500 L953.500 65.500 L949.600 65.500 L949.600 69.200 Z" fill="#0a30c0" stroke="#06208a" stroke-width="0.500"/><path d="M965.500 64 L959.900 58.800 L959.900 62.500 L956 62.500 L956 65.500 L959.900 65.500 L959.900 69.200 Z" fill="#2a7cf0" stroke="#1040b0" stroke-width="0.500"/><rect x="953.300" y="56.300" width="3" height="15" fill="#1550d8" stroke="#0a2a90" stroke-width="0.500"/></g>
<g><path d="M990.600 53.400 L1000.600 64.200 L995 64.200 L995 73.400 L986.200 73.400 L986.200 64.200 L980.700 64.200 Z" fill="#333" opacity="0.600" transform="translate(1,1)"/><path d="M990.600 53.400 L1000.600 64.200 L995 64.200 L995 73.400 L986.200 73.400 L986.200 64.200 L980.700 64.200 Z" fill="url(#gBlue2)" stroke="#0a2a90" stroke-width="0.500"/></g>
<g><path d="M1027 73.900 L1037 62.900 L1031 62.900 L1031 53.800 L1022 53.800 L1022 62.900 L1017 62.900 Z" fill="#333" opacity="0.600" transform="translate(1,1)"/><path d="M1027 73.900 L1037 62.900 L1031 62.900 L1031 53.800 L1022 53.800 L1022 62.900 L1017 62.900 Z" fill="url(#gBlue2)" stroke="#0a2a90" stroke-width="0.500"/></g>
<g>
<path d="M1054 54.800 L1062 54.800" stroke="#0818d8" stroke-width="2" stroke-dasharray="2 1.500" fill="none"/>
<path d="M1054 56 L1054 62" stroke="#0818d8" stroke-width="2" stroke-dasharray="2 1.500" fill="none"/>
<path d="M1063.500 54.800 L1072 54.800 L1072 73 L1065 73" stroke="#2a8cf8" stroke-width="2" stroke-dasharray="2 1.500" fill="none"/>
<rect x="1052.600" y="64.300" width="11.300" height="9.700" fill="#1450d0" stroke="#0a2a90" stroke-width="0.700"/>
<rect x="1055.700" y="67.200" width="5.300" height="4.300" fill="#fff" stroke="#777" stroke-width="0.700"/>
<path d="M1062.500 61.500 L1066.500 57.800 L1065 56.300 L1071.300 55.800 L1070.800 62 L1069.300 60.500 L1065.300 64.200 Z" fill="url(#gBlue2)" stroke="#0a2a90" stroke-width="0.500"/>
</g>
<g>
<path d="M1102.500 53 L1099 61 L1095 66 L1088.500 73.500 L1098 72 L1108.500 68.500 L1104.500 64 Z" fill="#111" transform="translate(0.700,0.800)"/>
<path d="M1102.500 53 L1099 61 L1095 66 L1089 73 L1098 71.500 L1108 68 L1104.300 63.800 Z" fill="#0a10e8" stroke="#000" stroke-width="0.900"/>
<path d="M1088.200 57.800 L1093 53.500 L1101.800 63 L1097.200 67 Z" fill="#4a92e8" stroke="#0a2a70" stroke-width="0.700"/>
<path d="M1090 56.200 L1098.800 65.700 M1091.700 54.700 L1100.400 64.200" stroke="#a8d0ff" stroke-width="0.900"/>
<path d="M1097.200 67 L1101.800 63 L1102.200 68.500 Z" fill="#fff" stroke="#222" stroke-width="0.500"/>
<path d="M1100.800 67.200 L1102.200 68.500 L1102 66.500 Z" fill="#111"/>
</g>
<g><path d="M1124.500 60.500 L1132 54.500 L1136.500 60.500 L1144.500 55.500" stroke="#9a9a9a" stroke-width="3" fill="none" stroke-linejoin="miter" transform="translate(0.600,0.700)"/><path d="M1124.500 60.500 L1132 54.500 L1136.500 60.500 L1144.500 55.500" stroke="#b4b4b4" stroke-width="3" fill="none"/><path d="M1124.500 60.500 L1132 54.500 L1136.500 60.500 L1144.500 55.500" stroke="#fbfbfb" stroke-width="1.6" fill="none"/><path d="M1124.500 71.500 C1129 66 1132 66.500 1135 69.500 C1138 72.500 1141.500 71 1144.500 66.500" stroke="#9a9a9a" stroke-width="3" fill="none" stroke-linejoin="miter" transform="translate(0.600,0.700)"/><path d="M1124.500 71.500 C1129 66 1132 66.500 1135 69.500 C1138 72.500 1141.500 71 1144.500 66.500" stroke="#b4b4b4" stroke-width="3" fill="none"/><path d="M1124.500 71.500 C1129 66 1132 66.500 1135 69.500 C1138 72.500 1141.500 71 1144.500 66.500" stroke="#fbfbfb" stroke-width="1.6" fill="none"/><path d="M1130 63 L1139 63 L1134.500 68 Z" fill="#a8a8a8"/><path d="M1134.500 63 L1139 63 L1134.500 68 Z" fill="#c8c8c8"/></g>
<g>
<path d="M1169.300 55 h3.400 v3.200 h3.300 v3.400 h-3.300 v3.200 h-3.400 v-3.200 h-3.300 v-3.400 h3.300 z" fill="#8f8f8f" stroke="#7d7d7d" stroke-width="0.500"/>
<rect x="1160" y="69.200" width="22" height="2.600" rx="1.200" fill="#c9c9c9" stroke="#ababab" stroke-width="0.600"/>
<circle cx="1171" cy="70.300" r="3.100" fill="#b5b5b5" stroke="#9d9d9d" stroke-width="0.600"/><circle cx="1170.500" cy="69.500" r="1.300" fill="#d8d8d8"/>
</g>
<g>
<rect x="1202" y="56.600" width="10" height="3.400" fill="#8f8f8f" stroke="#7d7d7d" stroke-width="0.500"/>
<rect x="1196" y="67.300" width="22" height="2.600" rx="1.200" fill="#e6e6e6" stroke="#ababab" stroke-width="0.600"/>
<circle cx="1207" cy="68.400" r="3.100" fill="#b5b5b5" stroke="#9d9d9d" stroke-width="0.600"/><circle cx="1206.500" cy="67.600" r="1.300" fill="#d8d8d8"/>
</g>
<g>
<path d="M1233.500 69.500 L1244 74.500 L1254 68.500 L1244 64.500 Z" fill="#666" transform="translate(0.800,0.800)"/>
<path d="M1233 69 L1243.500 74 L1253.500 68 L1243.500 64 Z" fill="#fff" stroke="#222" stroke-width="1.100"/>
<path d="M1232 58.700 L1241.500 52 L1253.300 56 L1253.300 64.200 L1243.200 68.800 L1232 65.600 Z" fill="#0a30d0" stroke="#000" stroke-width="0.900" stroke-linejoin="round"/>
<path d="M1232 58.700 L1241.500 52 L1253.300 56 L1243.200 61.600 Z" fill="#2a80f0" stroke="#000" stroke-width="0.700" stroke-linejoin="round"/>
<path d="M1243.200 61.600 L1253.300 56 L1253.300 64.200 L1243.200 68.800 Z" fill="#1458d8" stroke="#000" stroke-width="0.700" stroke-linejoin="round"/>
</g>
<path d="M1288 60 L1291.500 63.500 L1288 67 M1293 60 L1296.500 63.500 L1293 67" stroke="#111" stroke-width="1.600" fill="none"/>
</svg>
<!-- ===== Combo View dock ===== -->
<div class="txt" style="left:2px;top:89px;">Combo View</div>
<svg class="abs" style="left:246px;top:91px" width="29" height="12" viewBox="0 0 29 12">
 <rect x="0.5" y="0.5" width="10" height="10" rx="2" fill="#f5f4f3" stroke="#6b6963"/>
 <rect x="4.5" y="2.5" width="4" height="4" fill="none" stroke="#5a5853"/>
 <rect x="2.5" y="4.5" width="4" height="4" fill="#f5f4f3" stroke="#5a5853"/>
 <rect x="17.500" y="0.5" width="10" height="10" rx="2" fill="#f5f4f3" stroke="#6b6963"/>
 <path d="M20 3 L25 8 M25 3 L20 8" stroke="#4a4843" stroke-width="2" fill="none"/>
</svg>
<!-- tab pane frame -->
<div class="abs" style="left:0px;top:138px;width:277px;height:579px;box-sizing:border-box;border:1px solid #b9b5ad;border-radius:3px;background:#f2f1f0;"></div>
<!-- tabs -->
<div class="abs" style="left:59px;top:113px;width:51px;height:26px;box-sizing:border-box;border:1px solid #b9b5ad;border-bottom:none;border-radius:5px 5px 0 0;background:linear-gradient(#f4f3f2 0%,#efedeb 60%,#dad7d3 100%);"></div>
<div class="abs" style="left:0px;top:110px;width:59px;height:30px;box-sizing:border-box;border:1px solid #b9b5ad;border-bottom:none;border-radius:5px 5px 0 0;background:linear-gradient(#fbfafa,#f2f1f0);"></div>
<div class="txt" style="left:8px;top:116px;letter-spacing:0.450px;">Model</div>
<div class="txt" style="left:66px;top:117px;">Tasks</div>
<!-- tree widget -->
<div class="abs" style="left:2px;top:140px;width:273px;height:245px;box-sizing:border-box;border:1px solid #b9b5ad;background:#fff;"></div>
<div class="abs" style="left:3px;top:141px;width:271px;height:24px;background:linear-gradient(#fdfdfc,#edebe8);border-bottom:1px solid #b9b5ad;"></div>
<div class="txt" style="left:7px;top:146px;letter-spacing:0.200px;">Labels &amp; Attributes</div>
<div class="txt" style="left:6px;top:168px;letter-spacing:0.400px;">Application</div>
<svg class="abs" style="left:11px;top:190px" width="10" height="9" viewBox="0 0 10 9"><path d="M1.5 1.5 L8 1.500 L4.750 7.500 Z" fill="#8b8b8b" stroke="#555" stroke-width="1" stroke-linejoin="round"/></svg>
<!-- document icon -->
<svg class="abs" style="left:27px;top:186px" width="15" height="16" viewBox="0 0 15 16">
 <rect x="0.5" y="0.5" width="13" height="14" fill="#f4f4f4" stroke="#b8b8b8"/>
 <path d="M5 6 A4 4 0 0 1 12.500 6 L12.500 9 L5 9 Z" fill="#e01010"/>
 <rect x="2.500" y="6.500" width="7" height="6" fill="#3a53c8" stroke="#1f2f8c" stroke-width="0.800"/>
</svg>
<div class="abs" style="left:48px;top:186px;width:226px;height:17px;overflow:hidden;"><div class="txt" style="left:0;top:1px;font-weight:bold;color:#222;letter-spacing:-0.100px;">F2-T29-ej2-hotend-witbox-hephestos</div></div>
<svg class="abs" style="left:31px;top:209px" width="9" height="10" viewBox="0 0 9 10"><path d="M1.5 1.500 L7 5 L1.500 8.500 Z" fill="#a8a8a8" stroke="#555" stroke-width="1" stroke-linejoin="round"/></svg>
<!-- cubes -->
<svg class="abs" style="left:47px;top:207px" width="14" height="13" viewBox="0 0 15 14" preserveAspectRatio="none"><path d="M1 3 L10 3.500 L10 13 L1 12 Z" fill="#7d7d7d" stroke="#444" stroke-width="0.800"/><path d="M1 3 L4.500 0.800 L13.500 1 L10 3.500 Z" fill="#a5a5a5" stroke="#444" stroke-width="0.800"/><path d="M10 3.500 L13.500 1 L13.500 10 L10 13 Z" fill="#5e5e5e" stroke="#444" stroke-width="0.800"/></svg>
<div class="txt" style="left:68px;top:206px;color:#a3a3a3;letter-spacing:-0.050px;">Compound002</div>
<svg class="abs" style="left:47px;top:226px" width="14" height="13" viewBox="0 0 15 14" preserveAspectRatio="none"><path d="M1 3 L10 3.500 L10 13 L1 12 Z" fill="#0a2cf0" stroke="#05104a" stroke-width="0.800"/><path d="M1 3 L4.500 0.800 L13.500 1 L10 3.500 Z" fill="#4a6bff" stroke="#05104a" stroke-width="0.800"/><path d="M10 3.500 L13.500 1 L13.500 10 L10 13 Z" fill="#0618a8" stroke="#05104a" stroke-width="0.800"/></svg>
<div class="txt" style="left:68px;top:225px;color:#333;letter-spacing:-0.050px;">Compound003</div>
<svg class="abs" style="left:47px;top:245px" width="14" height="13" viewBox="0 0 15 14" preserveAspectRatio="none"><path d="M1 3 L10 3.500 L10 13 L1 12 Z" fill="#0a2cf0" stroke="#05104a" stroke-width="0.800"/><path d="M1 3 L4.500 0.800 L13.500 1 L10 3.500 Z" fill="#4a6bff" stroke="#05104a" stroke-width="0.800"/><path d="M10 3.500 L13.500 1 L13.500 10 L10 13 Z" fill="#0618a8" stroke="#05104a" stroke-width="0.800"/></svg>
<div class="txt" style="left:68px;top:244px;font-weight:bold;color:#222;letter-spacing:-0.350px;">Compound004</div>
<!-- horizontal scrollbar -->
<div class="abs" style="left:3px;top:390px;width:271px;height:12px;box-sizing:border-box;border:1px solid #c4c0b9;border-radius:6px;background:linear-gradient(#e0ddd9,#ecebe8);"></div>
<div class="abs" style="left:3px;top:390px;width:14px;height:12px;box-sizing:border-box;border:1px solid #c4c0b9;border-right:none;border-radius:6px 0 0 6px;background:#f4f3f2;"></div>
<div class="abs" style="left:261px;top:390px;width:13px;height:12px;box-sizing:border-box;border:1px solid #c4c0b9;border-left:none;border-radius:0 6px 6px 0;background:#f4f3f2;"></div>
<div class="abs" style="left:15px;top:390px;width:217px;height:12px;box-sizing:border-box;border:1px solid #a9a59d;border-radius:6px;background:linear-gradient(#fdfdfd,#e6e4e1);"></div>
<svg class="abs" style="left:8px;top:393px" width="4" height="6" viewBox="0 0 4 6"><path d="M3.500 0.500 L3.500 5.500 L0.500 3 Z" fill="#b5b2ad"/></svg>
<svg class="abs" style="left:265px;top:392px" width="5" height="8" viewBox="0 0 5 8"><path d="M0.500 0.500 L0.500 7.500 L4.500 4 Z" fill="#4c4c4c"/></svg>
<div class="abs" style="left:119px;top:394px;width:7px;height:4px;background:repeating-linear-gradient(to right,#9a9791 0,#9a9791 1px,transparent 1px,transparent 3px);"></div>
<!-- splitter grips -->
<div class="abs" style="left:135px;top:403px;width:7px;height:4px;background:repeating-linear-gradient(to right,#c4c1bc 0,#c4c1bc 1px,transparent 1px,transparent 3px);"></div>
<div class="abs" style="left:278px;top:398px;width:4px;height:7px;background:repeating-linear-gradient(to bottom,#c4c1bc 0,#c4c1bc 1px,transparent 1px,transparent 3px);"></div>
<!-- property editor -->
<div class="abs" style="left:2px;top:408px;width:274px;height:279px;box-sizing:border-box;border:1px solid #b9b5ad;border-radius:3px 3px 0 0;background:#f7f6f5;"></div>
<div class="abs" style="left:4px;top:410px;width:269px;height:275px;box-sizing:border-box;border:1px solid #b9b5ad;background:#fff;"></div>
<div class="abs" style="left:5px;top:411px;width:267px;height:24px;background:linear-gradient(#fdfdfc,#edebe8);border-bottom:1px solid #b9b5ad;"></div>
<div class="abs" style="left:104px;top:411px;width:1px;height:24px;background:#cfccc6;"></div>
<div class="txt" style="left:9px;top:416px;letter-spacing:0.600px;">Property</div>
<div class="txt" style="left:108px;top:416px;letter-spacing:0.800px;">Value</div>
<!-- View / Data tabs -->
<svg class="abs" style="left:0;top:684px" width="110" height="34" viewBox="0 0 110 34">
 <path d="M52.500 4.500 L59 24 Q61 30 66 30 L84 30 Q88.500 30 90.500 24 L97.500 4.500" fill="#f4f3f2" stroke="#3a3a3a" stroke-width="1"/>
 <path d="M2.500 2.500 L9 25 Q11 31 16 31 L37 31 Q41.500 31 43.500 25 L51 2.500 Z" fill="#fff" stroke="none"/>
 <path d="M2.500 2.500 L9 25 Q11 31 16 31 L37 31 Q41.500 31 43.500 25 L51 2.500" fill="none" stroke="#3a3a3a" stroke-width="1"/>
</svg>
<div class="txt" style="left:11px;top:693px;">View</div>
<div class="txt" style="left:60px;top:692px;">Data</div>
<!-- ===== 3D view ===== -->
<svg class="abs" style="left:283px;top:84px" width="988" height="601" viewBox="283 84 988 601">
<defs>
<linearGradient id="bg" x1="0" y1="0" x2="0" y2="1"><stop offset="0" stop-color="#333365"/><stop offset="1" stop-color="#9797aa"/></linearGradient>
<linearGradient id="cyl" x1="0" y1="0" x2="1" y2="0"><stop offset="0" stop-color="#626262"/><stop offset="0.080" stop-color="#7c7c7c"/><stop offset="0.300" stop-color="#b2b2b2"/><stop offset="0.550" stop-color="#afafaf"/><stop offset="0.800" stop-color="#9a9a9a"/><stop offset="1" stop-color="#7a7a7a"/></linearGradient>
<linearGradient id="cone" x1="0" y1="0" x2="1" y2="0"><stop offset="0" stop-color="#9a9a9a"/><stop offset="0.350" stop-color="#c6c6c6"/><stop offset="0.750" stop-color="#b0b0b0"/><stop offset="1" stop-color="#8a8a8a"/></linearGradient>
<linearGradient id="thrD" x1="0" y1="0" x2="1" y2="0"><stop offset="0" stop-color="#5c5c5c"/><stop offset="0.400" stop-color="#757575"/><stop offset="1" stop-color="#555"/></linearGradient>
<linearGradient id="thrL" x1="0" y1="0" x2="1" y2="0"><stop offset="0" stop-color="#8a8a8a"/><stop offset="0.350" stop-color="#b8b8b8"/><stop offset="1" stop-color="#7a7a7a"/></linearGradient>
<linearGradient id="brass" x1="0" y1="0" x2="1" y2="0"><stop offset="0" stop-color="#a08c2e"/><stop offset="0.500" stop-color="#b39c38"/><stop offset="1" stop-color="#a8902e"/></linearGradient>
</defs>
<rect x="283" y="84" width="988" height="601" fill="url(#bg)"/>
<g><path d="M787.1 190.0 L790.1 188.5 L795.1 190.0 L795.3 193.5 L792.1 195.1 L787.1 193.0 Z" fill="#383838" stroke="#0a0a0a" stroke-width="1" stroke-linejoin="round" />
<path d="M787.1 190.0 L790.1 188.5 L792.3 191.8 L788.3 193.0 Z" fill="#8c8c8c" stroke="#0a0a0a" stroke-width="0.7" stroke-linejoin="round" />
<path d="M798.0 211.0 L812.0 201.5 L812.6 205.0 L798.5 214.0 Z" fill="#4a4a4a" stroke="#0a0a0a" stroke-width="1" stroke-linejoin="round" />
<path d="M796.5 203.5 L808.0 195.0 L813.5 196.0 L812.0 201.5 L798.0 211.0 Z" fill="#9a9a9a" stroke="#0a0a0a" stroke-width="1.1" stroke-linejoin="round" />
<path d="M808.0 195.0 L813.6 196.0 L812.6 205.0 L810.5 202.0 Z" fill="#333" stroke="#0a0a0a" stroke-width="0.8" stroke-linejoin="round" />
<path d="M797.6 214.6 L806.2 213.6 L805.7 216.1 L798.1 217.3 Z" fill="#b8b8b8" stroke="#0a0a0a" stroke-width="0.9" stroke-linejoin="round" />
<path d="M747.5 190.5 L758.0 182.5 L795.6 196.6 L786.6 204.6 Z" fill="#ababab" stroke="#0a0a0a" stroke-width="1.6" stroke-linejoin="round" />
<path d="M786.6 204.6 L795.6 196.6 L796.1 219.1 L790.1 224.1 L789.1 217.1 L786.6 218.1 Z" fill="#a2a2a2" stroke="#0a0a0a" stroke-width="1.6" stroke-linejoin="round" />
<path d="M752.0 208.1 L757.0 205.1 L761.6 202.6 L772.1 207.1 L779.6 210.1 L779.6 216.3 L786.6 218.6 L785.6 234.1 L780.1 236.2 L753.5 234.1 Z" fill="#d3d3d3" stroke="#0a0a0a" stroke-width="1.2" stroke-linejoin="round" />
<path d="M786.6 218.6 L789.1 217.1 L790.1 224.1 L785.6 234.1 Z" fill="#dedede" stroke="#0a0a0a" stroke-width="1.2" stroke-linejoin="round" />
<path d="M747.5 190.5 L786.6 204.6 L786.6 218.1 L779.6 216.3 L779.6 210.1 L772.1 207.1 L772.1 200.3 L761.6 196.6 L761.6 202.6 L757.0 201.3 L753.0 200.1 L753.0 206.1 L748.0 205.1 Z" fill="#dedede" stroke="#0a0a0a" stroke-width="1.3" stroke-linejoin="round" />
<path d="M753.0 200.1 L757.0 201.3 L757.0 205.1 L753.0 206.9 Z" fill="#9e9e9e" stroke="#0a0a0a" stroke-width="0.9" stroke-linejoin="round" />
<path d="M763.6 197.3 L771.1 200.0 L771.1 204.3 L763.6 201.6 Z" fill="#e8e8e8" stroke="#0a0a0a" stroke-width="1.1" stroke-linejoin="round" />
<path d="M761.6 195.6 L761.6 202.6 M772.1 199.6 L772.1 207.1" stroke="#0a0a0a" stroke-width="1.200"/>
<path d="M755.0 227.1 L763.1 228.6 L761.1 230.9 L754.0 229.6 Z" fill="#bcbcbc" stroke="#0a0a0a" stroke-width="0.8" stroke-linejoin="round" />
<path d="M772.1 236.2 L774.6 234.1 L782.6 236.2 L780.1 239.2 Z" fill="#c4c4c4" stroke="#0a0a0a" stroke-width="1" stroke-linejoin="round" />
<path d="M780.1 239.2 L782.6 236.2 L784.1 237.7 L784.1 240.4 L780.1 243.7 Z" fill="#a6a6a6" stroke="#0a0a0a" stroke-width="1" stroke-linejoin="round" />
<path d="M772.1 236.2 L780.1 239.2 L780.1 243.7 L772.1 240.7 Z" fill="#e2e2e2" stroke="#0a0a0a" stroke-width="1.1" stroke-linejoin="round" />
<path d="M787.0 227.6 L801.6 218.6 L836.1 195.0 L841.6 196.0 L843.7 199.0 L849.7 199.0 L858.7 208.6 L858.7 218.1 L819.1 252.2 L787.5 240.6 Z" fill="#2b2b2b" stroke="#0a0a0a" stroke-width="1.6" stroke-linejoin="round" />
<path d="M811.6 219.6 L836.1 195.0 L841.6 196.0 L843.7 199.0 L849.7 199.0 L858.7 208.6 L830.1 229.1 L828.1 225.1 L825.6 224.6 Z" fill="#232323" stroke="#0a0a0a" stroke-width="1" stroke-linejoin="round" />
<path d="M819.1 235.6 L828.1 229.1 L830.1 229.1 L858.7 208.6 L858.7 218.1 L818.6 252.2 Z" fill="#1a1a1a" stroke="#0a0a0a" stroke-width="1.2" stroke-linejoin="round" />
<path d="M787.0 227.6 L819.1 235.6 L818.6 252.2 L787.5 240.6 Z" fill="#2e2e2e" stroke="#0a0a0a" stroke-width="1.3" stroke-linejoin="round" />
<path d="M814.6 220.1 L827.1 210.1 M827.6 224.1 L840.1 214.1 M841.1 197.5 L836.1 203.0" stroke="#101010" stroke-width="2.200" fill="none"/>
<path d="M825.6 205.5 L830.6 202.5 L833.1 204.5 L828.1 207.9 Z" fill="#8a8a8a" stroke="#0a0a0a" stroke-width="0.5" stroke-linejoin="round" />
<path d="M837.6 210.1 L842.7 207.1 L845.2 209.1 L840.1 212.3 Z" fill="#8a8a8a" stroke="#0a0a0a" stroke-width="0.5" stroke-linejoin="round" />
<path d="M803 239 L721.500 302 Q708.500 312 708 328.500 L708 372 Q708 387 698.500 394.500" fill="none" stroke="#0a0a0a" stroke-width="9.400" stroke-linejoin="round"/>
<path d="M803 239 L721.500 302 Q708.500 312 708 328.500 L708 372 Q708 387 698.500 394.500" fill="none" stroke="#848484" stroke-width="7.200" stroke-linejoin="round"/>
<path d="M803 239 L721.500 302 Q708.500 312 708 328.500 L708 372 Q708 387 698.500 394.500" fill="none" stroke="#c8c8c8" stroke-width="2.600" stroke-linejoin="round" transform="translate(-2,-1.300)"/>
<path d="M803 239 L721.500 302 Q708.500 312 708 328.500 L708 372 Q708 387 698.500 394.500" fill="none" stroke="#b8b8b8" stroke-width="2.200" stroke-linejoin="round" transform="translate(2.200,1.300)"/>
<path d="M803 239 L721.500 302 Q708.500 312 708 328.500 L708 372 Q708 387 698.500 394.500" fill="none" stroke="#161616" stroke-width="1.500" stroke-linejoin="round"/>
<path d="M703.500 329 h9.500 M703.500 373.500 h9.500 M716.500 300.500 l6 6" stroke="#0a0a0a" stroke-width="0.900"/>
<path d="M628.0 501.0 L645.5 501.0 L636.4 510.0 Z" fill="#43371a" stroke="#0a0a0a" stroke-width="1" stroke-linejoin="round" />
<path d="M615.5 480.0 L657.6 480.0 L657.6 496.4 L646.0 500.5 L635.4 501.6 L624.0 499.5 L615.5 495.1 Z" fill="url(#brass)" stroke="#0a0a0a" stroke-width="1.6" stroke-linejoin="round" />
<path d="M635.400 488 L635.400 501.600" stroke="#0a0a0a" stroke-width="1.200"/>
<path d="M552.7 412.9 L610.0 372.5 L703.9 398.3 L645.8 444.6 Z" fill="#6e6e6e" stroke="#0a0a0a" stroke-width="1.6" stroke-linejoin="round" />
<path d="M552.7 412.9 L645.8 444.6 L645.4 492.6 L551.3 460.4 Z" fill="#a2a2a2" stroke="#0a0a0a" stroke-width="1.6" stroke-linejoin="round" />
<path d="M645.8 444.6 L703.9 398.3 L704.6 446.0 L645.4 492.6 Z" fill="#666666" stroke="#0a0a0a" stroke-width="1.6" stroke-linejoin="round" />
<path d="M552.7 412.9 L645.8 444.6 L642.6 447.2 L554.6 416.8 Z" fill="#c9c9c9" stroke="#0a0a0a" stroke-width="0.9" stroke-linejoin="round" />
<path d="M645.8 444.6 L645.4 492.6 L642.0 491.3 L642.6 447.2 Z" fill="#d4d4d4" stroke="#0a0a0a" stroke-width="0.9" stroke-linejoin="round" />
<path d="M645.8 444.6 L703.9 398.3 L703.8 401.2 L646.5 447.2 Z" fill="#8e8e8e" stroke="#0a0a0a" stroke-width="0.9" stroke-linejoin="round" />
<path d="M552.7 412.9 L551.3 460.4 L553.3 459.5 L554.6 416.8 Z" fill="#bdbdbd" stroke="#0a0a0a" stroke-width="0.8" stroke-linejoin="round" />
<g transform="matrix(0.930 0.317 0 1 580.200 448)"><circle r="16.700" fill="#cdcdcd" stroke="#0a0a0a" stroke-width="1.200"/><circle cx="-1.300" cy="-0.400" r="14.800" fill="#a2a2a2" stroke="#0a0a0a" stroke-width="1"/></g>
<path d="M681.0 390.5 L690.3 386.6 L699.5 396.0 L693.0 394.5 Z" fill="#3a3a3a" stroke="#0a0a0a" stroke-width="1" stroke-linejoin="round" />
<path d="M684.5 391.5 L690.5 389.0 L699.5 396.0 L694.5 398.5 L688.0 394.0 Z" fill="#c8982a" stroke="#0a0a0a" stroke-width="0.9" stroke-linejoin="round" />
<ellipse cx="701.800" cy="261.200" rx="5" ry="8.300" transform="rotate(-37.500 701.800 261.200)" fill="#b80b0b" stroke="#0a0a0a" stroke-width="1"/>
<path d="M671 284.800 L701.500 261.500" fill="none" stroke="#0a0a0a" stroke-width="19.3" stroke-linecap="butt" stroke-linejoin="round"/><path d="M671 284.800 L701.500 261.500" fill="none" stroke="#a30909" stroke-width="16.5" stroke-linecap="butt" stroke-linejoin="round"/><path d="M671 284.800 L701.500 261.500" fill="none" stroke="#c80d0d" stroke-width="11.88" transform="translate(0.48,0.72)" stroke-linejoin="round"/><path d="M671 284.800 L701.500 261.500" fill="none" stroke="#dc1010" stroke-width="5.94" transform="translate(1.2800000000000002,1.92)" stroke-linejoin="round"/>
<path d="M661 386 L661 310 Q661 293 671 284.800 L673 283.300" fill="none" stroke="#0a0a0a" stroke-width="21.3" stroke-linecap="butt" stroke-linejoin="round"/><path d="M661 386 L661 310 Q661 293 671 284.800 L673 283.300" fill="none" stroke="#b80a0a" stroke-width="18.5" stroke-linecap="butt" stroke-linejoin="round"/><path d="M661 386 L661 310 Q661 293 671 284.800 L673 283.300" fill="none" stroke="#ea1010" stroke-width="13.32" transform="translate(-0.96,-0.36)" stroke-linejoin="round"/><path d="M661 386 L661 310 Q661 293 671 284.800 L673 283.300" fill="none" stroke="#ff1a1a" stroke-width="6.66" transform="translate(-2.5600000000000005,-0.96)" stroke-linejoin="round"/>
<ellipse cx="761.500" cy="218" rx="3.800" ry="5.200" transform="rotate(-36 761.500 218)" fill="#b00a0a" stroke="#0a0a0a" stroke-width="1.300"/>
<path d="M701.500 261.500 L761.500 218" fill="none" stroke="#0a0a0a" stroke-width="10.2" stroke-linecap="butt" stroke-linejoin="round"/><path d="M701.500 261.500 L761.500 218" fill="none" stroke="#9c0808" stroke-width="8.2" stroke-linecap="butt" stroke-linejoin="round"/><path d="M701.500 261.500 L761.500 218" fill="none" stroke="#bb0b0b" stroke-width="5.90" transform="translate(-0.18,-0.3)" stroke-linejoin="round"/><path d="M701.500 261.500 L761.500 218" fill="none" stroke="#c60e0e" stroke-width="2.95" transform="translate(-0.48,-0.8)" stroke-linejoin="round"/>
<ellipse cx="720.500" cy="267.400" rx="5.200" ry="8.600" transform="rotate(-37.500 720.500 267.400)" fill="#b80b0b" stroke="#0a0a0a" stroke-width="1"/>
<path d="M690.500 291 L720.200 267.700" fill="none" stroke="#0a0a0a" stroke-width="19.8" stroke-linecap="butt" stroke-linejoin="round"/><path d="M690.500 291 L720.200 267.700" fill="none" stroke="#a30909" stroke-width="17" stroke-linecap="butt" stroke-linejoin="round"/><path d="M690.500 291 L720.200 267.700" fill="none" stroke="#c80d0d" stroke-width="12.24" transform="translate(0.48,0.72)" stroke-linejoin="round"/><path d="M690.500 291 L720.200 267.700" fill="none" stroke="#dc1010" stroke-width="6.12" transform="translate(1.2800000000000002,1.92)" stroke-linejoin="round"/>
<path d="M678.900 372 L678.900 316 Q678.900 300 690.500 291 L692.500 289.500" fill="none" stroke="#0a0a0a" stroke-width="21.8" stroke-linecap="butt" stroke-linejoin="round"/><path d="M678.900 372 L678.900 316 Q678.900 300 690.500 291 L692.500 289.500" fill="none" stroke="#b80a0a" stroke-width="19" stroke-linecap="butt" stroke-linejoin="round"/><path d="M678.900 372 L678.900 316 Q678.900 300 690.500 291 L692.500 289.500" fill="none" stroke="#ea1010" stroke-width="13.68" transform="translate(-0.96,-0.36)" stroke-linejoin="round"/><path d="M678.900 372 L678.900 316 Q678.900 300 690.500 291 L692.500 289.500" fill="none" stroke="#ff1a1a" stroke-width="6.84" transform="translate(-2.5600000000000005,-0.96)" stroke-linejoin="round"/>
<ellipse cx="778.600" cy="224.600" rx="3.800" ry="5.200" transform="rotate(-36 778.600 224.600)" fill="#b00a0a" stroke="#0a0a0a" stroke-width="1.300"/>
<path d="M720.200 267.700 L778.600 224.600" fill="none" stroke="#0a0a0a" stroke-width="10.2" stroke-linecap="butt" stroke-linejoin="round"/><path d="M720.200 267.700 L778.600 224.600" fill="none" stroke="#9c0808" stroke-width="8.2" stroke-linecap="butt" stroke-linejoin="round"/><path d="M720.200 267.700 L778.600 224.600" fill="none" stroke="#bb0b0b" stroke-width="5.90" transform="translate(-0.18,-0.3)" stroke-linejoin="round"/><path d="M720.200 267.700 L778.600 224.600" fill="none" stroke="#c60e0e" stroke-width="2.95" transform="translate(-0.48,-0.8)" stroke-linejoin="round"/>
<path d="M668.300 366 L668.300 378 Q671.500 388.500 680 388 Q687.500 384 689.500 366 Z" fill="#e01010" stroke="#0a0a0a" stroke-width="1.100"/>
<path d="M671.500 368 Q671.500 380 678 384 Q680 376 679 368 Z" fill="#ff2020" opacity="0.700"/>
<path d="M651.500 313 Q660 317.500 670 314.500 M669 316.500 Q679 323 689 318 M669 366 Q679 371.500 689 366 M664 276 Q672.500 279.500 677 290 M683.500 283.500 Q693 287.500 697.500 299" fill="none" stroke="#0a0a0a" stroke-width="1"/>
<path d="M621 390 L621 413.700 A17.800 10.500 0 0 0 656.600 413.700 L656.600 390 Z" fill="url(#cyl)" stroke="#0a0a0a" stroke-width="1.500"/>
<ellipse cx="638.4" cy="383.5" rx="29.5" ry="16" fill="url(#thrD)" stroke="#0a0a0a" stroke-width="1.300"/>
<ellipse cx="638.4" cy="381.2" rx="29.5" ry="16" fill="url(#thrL)" stroke="#0a0a0a" stroke-width="1.300"/>
<ellipse cx="638.4" cy="377.9" rx="29.5" ry="16" fill="url(#thrD)" stroke="#0a0a0a" stroke-width="1.300"/>
<ellipse cx="638.4" cy="373.3" rx="29.5" ry="16" fill="url(#thrL)" stroke="#0a0a0a" stroke-width="1.300"/>
<ellipse cx="638.4" cy="369.5" rx="29.5" ry="16" fill="url(#thrD)" stroke="#0a0a0a" stroke-width="1.300"/>
<ellipse cx="638.4" cy="364.8" rx="29.5" ry="16" fill="url(#thrL)" stroke="#0a0a0a" stroke-width="1.300"/>
<ellipse cx="638.4" cy="361.1" rx="29.5" ry="16" fill="url(#thrD)" stroke="#0a0a0a" stroke-width="1.300"/>
<ellipse cx="638.4" cy="356.4" rx="29.5" ry="16" fill="url(#thrD)" stroke="#0a0a0a" stroke-width="1.300"/>
<path d="M609.400 351.800 L609.400 358 Q616 366.500 632.700 372 L649.600 371.900 L667.400 356.700 L667.400 350.900 Z" fill="#b2b2b2" stroke="#0a0a0a" stroke-width="1.400" stroke-linejoin="round"/>
<path d="M649.6 365.9 L667.4 350.9 L667.4 356.7 L649.6 371.9 Z" fill="#858585" stroke="#0a0a0a" stroke-width="1.1" stroke-linejoin="round" />
<path d="M609.400 351.800 L621 343.400 L657.100 339.200 Q666 343 667.400 350.900 L649.600 365.900 L632.700 366.300 Q616 361.500 609.400 351.800 Z" fill="#6d6d6d" stroke="#0a0a0a" stroke-width="1.400" stroke-linejoin="round"/>
<path d="M622.100 246.500 L621.300 347.500 A17.500 10.800 0 0 0 656.300 347.500 L658.700 246.500 Z" fill="url(#cyl)" stroke="#0a0a0a" stroke-width="1.500"/>
<path d="M622.100 246.500 A18.300 10.600 0 0 0 658.700 246.500 L650.700 234.600 A9.300 5.400 0 0 0 632.100 234.600 Z" fill="url(#cone)" stroke="#0a0a0a" stroke-width="1.500" stroke-linejoin="round"/>
<ellipse cx="641.400" cy="234.600" rx="9.300" ry="5.400" fill="#bdbdbd" stroke="#0a0a0a" stroke-width="1.100"/>
<ellipse cx="641.400" cy="236.500" rx="5.200" ry="2.800" fill="#8e8e8e" stroke="#1a1a1a" stroke-width="1"/><ellipse cx="641.400" cy="237.300" rx="3" ry="1.500" fill="#6a6a6a"/>
<path d="M633 232 L636.500 236.500" stroke="#1a1a1a" stroke-width="0.800"/>
<path d="M595.300 400.500 L595.300 403.500 A8.400 6 0 0 0 612.100 403.500 L612.100 400.500 Z" fill="#1a1a1a" stroke="#0a0a0a" stroke-width="0.800"/>
<ellipse cx="603.700" cy="400.500" rx="8.400" ry="6" fill="#2a2a2a" stroke="#0a0a0a" stroke-width="0.800"/>
<ellipse cx="604" cy="400" rx="2.600" ry="1.900" fill="#484848"/></g>
<g transform="translate(183,63.500)"><path d="M787.1 190.0 L790.1 188.5 L795.1 190.0 L795.3 193.5 L792.1 195.1 L787.1 193.0 Z" fill="#383838" stroke="#0a0a0a" stroke-width="1" stroke-linejoin="round" />
<path d="M787.1 190.0 L790.1 188.5 L792.3 191.8 L788.3 193.0 Z" fill="#8c8c8c" stroke="#0a0a0a" stroke-width="0.7" stroke-linejoin="round" />
<path d="M798.0 211.0 L812.0 201.5 L812.6 205.0 L798.5 214.0 Z" fill="#4a4a4a" stroke="#0a0a0a" stroke-width="1" stroke-linejoin="round" />
<path d="M796.5 203.5 L808.0 195.0 L813.5 196.0 L812.0 201.5 L798.0 211.0 Z" fill="#9a9a9a" stroke="#0a0a0a" stroke-width="1.1" stroke-linejoin="round" />
<path d="M808.0 195.0 L813.6 196.0 L812.6 205.0 L810.5 202.0 Z" fill="#333" stroke="#0a0a0a" stroke-width="0.8" stroke-linejoin="round" />
<path d="M797.6 214.6 L806.2 213.6 L805.7 216.1 L798.1 217.3 Z" fill="#b8b8b8" stroke="#0a0a0a" stroke-width="0.9" stroke-linejoin="round" />
<path d="M747.5 190.5 L758.0 182.5 L795.6 196.6 L786.6 204.6 Z" fill="#ababab" stroke="#0a0a0a" stroke-width="1.6" stroke-linejoin="round" />
<path d="M786.6 204.6 L795.6 196.6 L796.1 219.1 L790.1 224.1 L789.1 217.1 L786.6 218.1 Z" fill="#a2a2a2" stroke="#0a0a0a" stroke-width="1.6" stroke-linejoin="round" />
<path d="M752.0 208.1 L757.0 205.1 L761.6 202.6 L772.1 207.1 L779.6 210.1 L779.6 216.3 L786.6 218.6 L785.6 234.1 L780.1 236.2 L753.5 234.1 Z" fill="#d3d3d3" stroke="#0a0a0a" stroke-width="1.2" stroke-linejoin="round" />
<path d="M786.6 218.6 L789.1 217.1 L790.1 224.1 L785.6 234.1 Z" fill="#dedede" stroke="#0a0a0a" stroke-width="1.2" stroke-linejoin="round" />
<path d="M747.5 190.5 L786.6 204.6 L786.6 218.1 L779.6 216.3 L779.6 210.1 L772.1 207.1 L772.1 200.3 L761.6 196.6 L761.6 202.6 L757.0 201.3 L753.0 200.1 L753.0 206.1 L748.0 205.1 Z" fill="#dedede" stroke="#0a0a0a" stroke-width="1.3" stroke-linejoin="round" />
<path d="M753.0 200.1 L757.0 201.3 L757.0 205.1 L753.0 206.9 Z" fill="#9e9e9e" stroke="#0a0a0a" stroke-width="0.9" stroke-linejoin="round" />
<path d="M763.6 197.3 L771.1 200.0 L771.1 204.3 L763.6 201.6 Z" fill="#e8e8e8" stroke="#0a0a0a" stroke-width="1.1" stroke-linejoin="round" />
<path d="M761.6 195.6 L761.6 202.6 M772.1 199.6 L772.1 207.1" stroke="#0a0a0a" stroke-width="1.200"/>
<path d="M755.0 227.1 L763.1 228.6 L761.1 230.9 L754.0 229.6 Z" fill="#bcbcbc" stroke="#0a0a0a" stroke-width="0.8" stroke-linejoin="round" />
<path d="M772.1 236.2 L774.6 234.1 L782.6 236.2 L780.1 239.2 Z" fill="#c4c4c4" stroke="#0a0a0a" stroke-width="1" stroke-linejoin="round" />
<path d="M780.1 239.2 L782.6 236.2 L784.1 237.7 L784.1 240.4 L780.1 243.7 Z" fill="#a6a6a6" stroke="#0a0a0a" stroke-width="1" stroke-linejoin="round" />
<path d="M772.1 236.2 L780.1 239.2 L780.1 243.7 L772.1 240.7 Z" fill="#e2e2e2" stroke="#0a0a0a" stroke-width="1.1" stroke-linejoin="round" />
<path d="M787.0 227.6 L801.6 218.6 L836.1 195.0 L841.6 196.0 L843.7 199.0 L849.7 199.0 L858.7 208.6 L858.7 218.1 L819.1 252.2 L787.5 240.6 Z" fill="#2b2b2b" stroke="#0a0a0a" stroke-width="1.6" stroke-linejoin="round" />
<path d="M811.6 219.6 L836.1 195.0 L841.6 196.0 L843.7 199.0 L849.7 199.0 L858.7 208.6 L830.1 229.1 L828.1 225.1 L825.6 224.6 Z" fill="#232323" stroke="#0a0a0a" stroke-width="1" stroke-linejoin="round" />
<path d="M819.1 235.6 L828.1 229.1 L830.1 229.1 L858.7 208.6 L858.7 218.1 L818.6 252.2 Z" fill="#1a1a1a" stroke="#0a0a0a" stroke-width="1.2" stroke-linejoin="round" />
<path d="M787.0 227.6 L819.1 235.6 L818.6 252.2 L787.5 240.6 Z" fill="#2e2e2e" stroke="#0a0a0a" stroke-width="1.3" stroke-linejoin="round" />
<path d="M814.6 220.1 L827.1 210.1 M827.6 224.1 L840.1 214.1 M841.1 197.5 L836.1 203.0" stroke="#101010" stroke-width="2.200" fill="none"/>
<path d="M825.6 205.5 L830.6 202.5 L833.1 204.5 L828.1 207.9 Z" fill="#8a8a8a" stroke="#0a0a0a" stroke-width="0.5" stroke-linejoin="round" />
<path d="M837.6 210.1 L842.7 207.1 L845.2 209.1 L840.1 212.3 Z" fill="#8a8a8a" stroke="#0a0a0a" stroke-width="0.5" stroke-linejoin="round" />
<path d="M803 239 L721.500 302 Q708.500 312 708 328.500 L708 372 Q708 387 698.500 394.500" fill="none" stroke="#0a0a0a" stroke-width="9.400" stroke-linejoin="round"/>
<path d="M803 239 L721.500 302 Q708.500 312 708 328.500 L708 372 Q708 387 698.500 394.500" fill="none" stroke="#848484" stroke-width="7.200" stroke-linejoin="round"/>
<path d="M803 239 L721.500 302 Q708.500 312 708 328.500 L708 372 Q708 387 698.500 394.500" fill="none" stroke="#c8c8c8" stroke-width="2.600" stroke-linejoin="round" transform="translate(-2,-1.300)"/>
<path d="M803 239 L721.500 302 Q708.500 312 708 328.500 L708 372 Q708 387 698.500 394.500" fill="none" stroke="#b8b8b8" stroke-width="2.200" stroke-linejoin="round" transform="translate(2.200,1.300)"/>
<path d="M803 239 L721.500 302 Q708.500 312 708 328.500 L708 372 Q708 387 698.500 394.500" fill="none" stroke="#161616" stroke-width="1.500" stroke-linejoin="round"/>
<path d="M703.500 329 h9.500 M703.500 373.500 h9.500 M716.500 300.500 l6 6" stroke="#0a0a0a" stroke-width="0.900"/>
<path d="M628.0 501.0 L645.5 501.0 L636.4 510.0 Z" fill="#43371a" stroke="#0a0a0a" stroke-width="1" stroke-linejoin="round" />
<path d="M615.5 480.0 L657.6 480.0 L657.6 496.4 L646.0 500.5 L635.4 501.6 L624.0 499.5 L615.5 495.1 Z" fill="url(#brass)" stroke="#0a0a0a" stroke-width="1.6" stroke-linejoin="round" />
<path d="M635.400 488 L635.400 501.600" stroke="#0a0a0a" stroke-width="1.200"/>
<path d="M552.7 412.9 L610.0 372.5 L703.9 398.3 L645.8 444.6 Z" fill="#6e6e6e" stroke="#0a0a0a" stroke-width="1.6" stroke-linejoin="round" />
<path d="M552.7 412.9 L645.8 444.6 L645.4 492.6 L551.3 460.4 Z" fill="#a2a2a2" stroke="#0a0a0a" stroke-width="1.6" stroke-linejoin="round" />
<path d="M645.8 444.6 L703.9 398.3 L704.6 446.0 L645.4 492.6 Z" fill="#666666" stroke="#0a0a0a" stroke-width="1.6" stroke-linejoin="round" />
<path d="M552.7 412.9 L645.8 444.6 L642.6 447.2 L554.6 416.8 Z" fill="#c9c9c9" stroke="#0a0a0a" stroke-width="0.9" stroke-linejoin="round" />
<path d="M645.8 444.6 L645.4 492.6 L642.0 491.3 L642.6 447.2 Z" fill="#d4d4d4" stroke="#0a0a0a" stroke-width="0.9" stroke-linejoin="round" />
<path d="M645.8 444.6 L703.9 398.3 L703.8 401.2 L646.5 447.2 Z" fill="#8e8e8e" stroke="#0a0a0a" stroke-width="0.9" stroke-linejoin="round" />
<path d="M552.7 412.9 L551.3 460.4 L553.3 459.5 L554.6 416.8 Z" fill="#bdbdbd" stroke="#0a0a0a" stroke-width="0.8" stroke-linejoin="round" />
<g transform="matrix(0.930 0.317 0 1 580.200 448)"><circle r="16.700" fill="#cdcdcd" stroke="#0a0a0a" stroke-width="1.200"/><circle cx="-1.300" cy="-0.400" r="14.800" fill="#a2a2a2" stroke="#0a0a0a" stroke-width="1"/></g>
<path d="M681.0 390.5 L690.3 386.6 L699.5 396.0 L693.0 394.5 Z" fill="#3a3a3a" stroke="#0a0a0a" stroke-width="1" stroke-linejoin="round" />
<path d="M684.5 391.5 L690.5 389.0 L699.5 396.0 L694.5 398.5 L688.0 394.0 Z" fill="#c8982a" stroke="#0a0a0a" stroke-width="0.9" stroke-linejoin="round" />
<ellipse cx="701.800" cy="261.200" rx="5" ry="8.300" transform="rotate(-37.500 701.800 261.200)" fill="#b80b0b" stroke="#0a0a0a" stroke-width="1"/>
<path d="M671 284.800 L701.500 261.500" fill="none" stroke="#0a0a0a" stroke-width="19.3" stroke-linecap="butt" stroke-linejoin="round"/><path d="M671 284.800 L701.500 261.500" fill="none" stroke="#a30909" stroke-width="16.5" stroke-linecap="butt" stroke-linejoin="round"/><path d="M671 284.800 L701.500 261.500" fill="none" stroke="#c80d0d" stroke-width="11.88" transform="translate(0.48,0.72)" stroke-linejoin="round"/><path d="M671 284.800 L701.500 261.500" fill="none" stroke="#dc1010" stroke-width="5.94" transform="translate(1.2800000000000002,1.92)" stroke-linejoin="round"/>
<path d="M661 386 L661 310 Q661 293 671 284.800 L673 283.300" fill="none" stroke="#0a0a0a" stroke-width="21.3" stroke-linecap="butt" stroke-linejoin="round"/><path d="M661 386 L661 310 Q661 293 671 284.800 L673 283.300" fill="none" stroke="#b80a0a" stroke-width="18.5" stroke-linecap="butt" stroke-linejoin="round"/><path d="M661 386 L661 310 Q661 293 671 284.800 L673 283.300" fill="none" stroke="#ea1010" stroke-width="13.32" transform="translate(-0.96,-0.36)" stroke-linejoin="round"/><path d="M661 386 L661 310 Q661 293 671 284.800 L673 283.300" fill="none" stroke="#ff1a1a" stroke-width="6.66" transform="translate(-2.5600000000000005,-0.96)" stroke-linejoin="round"/>
<ellipse cx="761.500" cy="218" rx="3.800" ry="5.200" transform="rotate(-36 761.500 218)" fill="#b00a0a" stroke="#0a0a0a" stroke-width="1.300"/>
<path d="M701.500 261.500 L761.500 218" fill="none" stroke="#0a0a0a" stroke-width="10.2" stroke-linecap="butt" stroke-linejoin="round"/><path d="M701.500 261.500 L761.500 218" fill="none" stroke="#9c0808" stroke-width="8.2" stroke-linecap="butt" stroke-linejoin="round"/><path d="M701.500 261.500 L761.500 218" fill="none" stroke="#bb0b0b" stroke-width="5.90" transform="translate(-0.18,-0.3)" stroke-linejoin="round"/><path d="M701.500 261.500 L761.500 218" fill="none" stroke="#c60e0e" stroke-width="2.95" transform="translate(-0.48,-0.8)" stroke-linejoin="round"/>
<ellipse cx="720.500" cy="267.400" rx="5.200" ry="8.600" transform="rotate(-37.500 720.500 267.400)" fill="#b80b0b" stroke="#0a0a0a" stroke-width="1"/>
<path d="M690.500 291 L720.200 267.700" fill="none" stroke="#0a0a0a" stroke-width="19.8" stroke-linecap="butt" stroke-linejoin="round"/><path d="M690.500 291 L720.200 267.700" fill="none" stroke="#a30909" stroke-width="17" stroke-linecap="butt" stroke-linejoin="round"/><path d="M690.500 291 L720.200 267.700" fill="none" stroke="#c80d0d" stroke-width="12.24" transform="translate(0.48,0.72)" stroke-linejoin="round"/><path d="M690.500 291 L720.200 267.700" fill="none" stroke="#dc1010" stroke-width="6.12" transform="translate(1.2800000000000002,1.92)" stroke-linejoin="round"/>
<path d="M678.900 372 L678.900 316 Q678.900 300 690.500 291 L692.500 289.500" fill="none" stroke="#0a0a0a" stroke-width="21.8" stroke-linecap="butt" stroke-linejoin="round"/><path d="M678.900 372 L678.900 316 Q678.900 300 690.500 291 L692.500 289.500" fill="none" stroke="#b80a0a" stroke-width="19" stroke-linecap="butt" stroke-linejoin="round"/><path d="M678.900 372 L678.900 316 Q678.900 300 690.500 291 L692.500 289.500" fill="none" stroke="#ea1010" stroke-width="13.68" transform="translate(-0.96,-0.36)" stroke-linejoin="round"/><path d="M678.900 372 L678.900 316 Q678.900 300 690.500 291 L692.500 289.500" fill="none" stroke="#ff1a1a" stroke-width="6.84" transform="translate(-2.5600000000000005,-0.96)" stroke-linejoin="round"/>
<ellipse cx="778.600" cy="224.600" rx="3.800" ry="5.200" transform="rotate(-36 778.600 224.600)" fill="#b00a0a" stroke="#0a0a0a" stroke-width="1.300"/>
<path d="M720.200 267.700 L778.600 224.600" fill="none" stroke="#0a0a0a" stroke-width="10.2" stroke-linecap="butt" stroke-linejoin="round"/><path d="M720.200 267.700 L778.600 224.600" fill="none" stroke="#9c0808" stroke-width="8.2" stroke-linecap="butt" stroke-linejoin="round"/><path d="M720.200 267.700 L778.600 224.600" fill="none" stroke="#bb0b0b" stroke-width="5.90" transform="translate(-0.18,-0.3)" stroke-linejoin="round"/><path d="M720.200 267.700 L778.600 224.600" fill="none" stroke="#c60e0e" stroke-width="2.95" transform="translate(-0.48,-0.8)" stroke-linejoin="round"/>
<path d="M668.300 366 L668.300 378 Q671.500 388.500 680 388 Q687.500 384 689.500 366 Z" fill="#e01010" stroke="#0a0a0a" stroke-width="1.100"/>
<path d="M671.500 368 Q671.500 380 678 384 Q680 376 679 368 Z" fill="#ff2020" opacity="0.700"/>
<path d="M651.500 313 Q660 317.500 670 314.500 M669 316.500 Q679 323 689 318 M669 366 Q679 371.500 689 366 M664 276 Q672.500 279.500 677 290 M683.500 283.500 Q693 287.500 697.500 299" fill="none" stroke="#0a0a0a" stroke-width="1"/>
<path d="M621 390 L621 413.700 A17.800 10.500 0 0 0 656.600 413.700 L656.600 390 Z" fill="url(#cyl)" stroke="#0a0a0a" stroke-width="1.500"/>
<ellipse cx="638.4" cy="383.5" rx="29.5" ry="16" fill="url(#thrD)" stroke="#0a0a0a" stroke-width="1.300"/>
<ellipse cx="638.4" cy="381.2" rx="29.5" ry="16" fill="url(#thrL)" stroke="#0a0a0a" stroke-width="1.300"/>
<ellipse cx="638.4" cy="377.9" rx="29.5" ry="16" fill="url(#thrD)" stroke="#0a0a0a" stroke-width="1.300"/>
<ellipse cx="638.4" cy="373.3" rx="29.5" ry="16" fill="url(#thrL)" stroke="#0a0a0a" stroke-width="1.300"/>
<ellipse cx="638.4" cy="369.5" rx="29.5" ry="16" fill="url(#thrD)" stroke="#0a0a0a" stroke-width="1.300"/>
<ellipse cx="638.4" cy="364.8" rx="29.5" ry="16" fill="url(#thrL)" stroke="#0a0a0a" stroke-width="1.300"/>
<ellipse cx="638.4" cy="361.1" rx="29.5" ry="16" fill="url(#thrD)" stroke="#0a0a0a" stroke-width="1.300"/>
<ellipse cx="638.4" cy="356.4" rx="29.5" ry="16" fill="url(#thrD)" stroke="#0a0a0a" stroke-width="1.300"/>
<path d="M609.400 351.800 L609.400 358 Q616 366.500 632.700 372 L649.600 371.900 L667.400 356.700 L667.400 350.900 Z" fill="#b2b2b2" stroke="#0a0a0a" stroke-width="1.400" stroke-linejoin="round"/>
<path d="M649.6 365.9 L667.4 350.9 L667.4 356.7 L649.6 371.9 Z" fill="#858585" stroke="#0a0a0a" stroke-width="1.1" stroke-linejoin="round" />
<path d="M609.400 351.800 L621 343.400 L657.100 339.200 Q666 343 667.400 350.900 L649.600 365.900 L632.700 366.300 Q616 361.500 609.400 351.800 Z" fill="#6d6d6d" stroke="#0a0a0a" stroke-width="1.400" stroke-linejoin="round"/>
<path d="M622.100 246.500 L621.300 347.500 A17.500 10.800 0 0 0 656.300 347.500 L658.700 246.500 Z" fill="url(#cyl)" stroke="#0a0a0a" stroke-width="1.500"/>
<path d="M622.100 246.500 A18.300 10.600 0 0 0 658.700 246.500 L650.700 234.600 A9.300 5.400 0 0 0 632.100 234.600 Z" fill="url(#cone)" stroke="#0a0a0a" stroke-width="1.500" stroke-linejoin="round"/>
<ellipse cx="641.400" cy="234.600" rx="9.300" ry="5.400" fill="#bdbdbd" stroke="#0a0a0a" stroke-width="1.100"/>
<ellipse cx="641.400" cy="236.500" rx="5.200" ry="2.800" fill="#8e8e8e" stroke="#1a1a1a" stroke-width="1"/><ellipse cx="641.400" cy="237.300" rx="3" ry="1.500" fill="#6a6a6a"/>
<path d="M633 232 L636.500 236.500" stroke="#1a1a1a" stroke-width="0.800"/>
<path d="M595.300 400.500 L595.300 403.500 A8.400 6 0 0 0 612.100 403.500 L612.100 400.500 Z" fill="#1a1a1a" stroke="#0a0a0a" stroke-width="0.800"/>
<ellipse cx="603.700" cy="400.500" rx="8.400" ry="6" fill="#2a2a2a" stroke="#0a0a0a" stroke-width="0.800"/>
<ellipse cx="604" cy="400" rx="2.600" ry="1.900" fill="#484848"/></g>
<g>
<path d="M1241 654.600 L1226 649.600" stroke="#1c8c1c" stroke-width="1.800"/><path d="M1225.500 649.400 L1231.800 649.300 L1230.400 653.300 Z" fill="#1c8c1c"/>
<path d="M1241 654.600 L1249.500 648.300" stroke="#8c1c1c" stroke-width="1.800"/><path d="M1250.500 647.500 L1244.800 648.800 L1247.500 652.400 Z" fill="#8c1c1c"/>
<path d="M1241 655 L1241 635" stroke="#1c1c8c" stroke-width="2"/><path d="M1241 633.800 L1238.800 642 L1243.200 642 Z" fill="#1c1c8c"/>
<text x="1243.600" y="634.800" font-family="Liberation Sans, sans-serif" font-size="9.300" fill="#000">Z</text>
<text x="1252.400" y="648" font-family="Liberation Sans, sans-serif" font-size="9.300" fill="#000">X</text>
<text x="1227.300" y="649.800" font-family="Liberation Sans, sans-serif" font-size="9.300" fill="#000">Y</text>
</g>
</svg>
<!-- ===== snap toolbar (right) ===== -->
<div class="abs" style="left:1282px;top:88px;width:7px;height:4px;background:repeating-linear-gradient(to right,#c4c1bc 0,#c4c1bc 1px,transparent 1px,transparent 3px);"></div>
<div class="abs" style="left:1274px;top:96px;width:24px;height:24px;box-sizing:border-box;border:1px solid #b0aba4;border-radius:4px;background:linear-gradient(#dddad6,#efeeec);"></div>
<div class="abs" style="left:1274px;top:122px;width:24px;height:24px;box-sizing:border-box;border:1px solid #b0aba4;border-radius:4px;background:linear-gradient(#fdfdfc,#eceae7);"></div>
<div class="abs" style="left:1274px;top:148px;width:24px;height:24px;box-sizing:border-box;border:1px solid #b0aba4;border-radius:4px;background:linear-gradient(#fdfdfc,#eceae7);"></div>
<div class="abs" style="left:1274px;top:174px;width:24px;height:24px;box-sizing:border-box;border:1px solid #b0aba4;border-radius:4px;background:linear-gradient(#dddad6,#efeeec);"></div>
<div class="abs" style="left:1274px;top:200px;width:24px;height:24px;box-sizing:border-box;border:1px solid #b0aba4;border-radius:4px;background:linear-gradient(#fdfdfc,#eceae7);"></div>
<div class="abs" style="left:1274px;top:226px;width:24px;height:24px;box-sizing:border-box;border:1px solid #b0aba4;border-radius:4px;background:linear-gradient(#fdfdfc,#eceae7);"></div>
<div class="abs" style="left:1274px;top:252px;width:24px;height:24px;box-sizing:border-box;border:1px solid #b0aba4;border-radius:4px;background:linear-gradient(#dddad6,#efeeec);"></div>
<div class="abs" style="left:1274px;top:278px;width:24px;height:24px;box-sizing:border-box;border:1px solid #b0aba4;border-radius:4px;background:linear-gradient(#fdfdfc,#eceae7);"></div>
<div class="abs" style="left:1274px;top:304px;width:24px;height:24px;box-sizing:border-box;border:1px solid #b0aba4;border-radius:4px;background:linear-gradient(#dddad6,#efeeec);"></div>
<div class="abs" style="left:1274px;top:330px;width:24px;height:24px;box-sizing:border-box;border:1px solid #b0aba4;border-radius:4px;background:linear-gradient(#fdfdfc,#eceae7);"></div>
<div class="abs" style="left:1274px;top:356px;width:24px;height:24px;box-sizing:border-box;border:1px solid #b0aba4;border-radius:4px;background:linear-gradient(#fdfdfc,#eceae7);"></div>
<div class="abs" style="left:1274px;top:382px;width:24px;height:24px;box-sizing:border-box;border:1px solid #b0aba4;border-radius:4px;background:linear-gradient(#fdfdfc,#eceae7);"></div>
<div class="abs" style="left:1274px;top:408px;width:24px;height:24px;box-sizing:border-box;border:1px solid #b0aba4;border-radius:4px;background:linear-gradient(#fdfdfc,#eceae7);"></div>
<div class="abs" style="left:1274px;top:434px;width:24px;height:24px;box-sizing:border-box;border:1px solid #b0aba4;border-radius:4px;background:linear-gradient(#dddad6,#efeeec);"></div>
<svg class="abs" style="left:1274px;top:96px" width="24" height="364" viewBox="0 0 24 364">
<g transform="translate(0,0)"><path d="M8.500 10.500 L8.500 8 Q8.500 5 12 5 Q15.500 5 15.500 8 L15.500 10.500" fill="none" stroke="#0a5443" stroke-width="2.600"/><path d="M8.500 10.500 L8.500 8 Q8.500 5 12 5 Q15.500 5 15.500 8 L15.500 10.500" fill="none" stroke="#2fc79c" stroke-width="1.100"/><rect x="7" y="10.500" width="10.300" height="7.500" fill="#12a880" stroke="#0a5443" stroke-width="0.900" stroke-linejoin="round"/><path d="M7.500 13 h9.300 M7.500 15.500 h9.300" stroke="#5fe0b8" stroke-width="0.800"/></g>
<g transform="translate(0,26)"><path d="M5.500 17 L17.500 6.500 L19 8.300 L7 18.800 Z" fill="#12a880" stroke="#0a5443" stroke-width="0.900" stroke-linejoin="round"/><path d="M8.500 11 L11 8.800 L15.500 11.500 L15.800 14.200 L13.200 16.500 L9 15.200 Z" fill="#12a880" stroke="#0a5443" stroke-width="0.900" stroke-linejoin="round"/></g>
<g transform="translate(0,52)"><path d="M10.800 4.500 h2.600 v10.500 h5.600 v2.800 h-13.800 v-2.800 h5.600 z" fill="#12a880" stroke="#0a5443" stroke-width="0.900" stroke-linejoin="round"/></g>
<g transform="translate(0,78)"><path d="M8 4.500 L9.700 6.200 L14.300 6.200 L16 4.500 L19.500 8 L17.800 9.700 L17.800 14.300 L19.500 16 L16 19.500 L14.300 17.800 L9.700 17.800 L8 19.500 L4.500 16 L6.200 14.300 L6.200 9.700 L4.500 8 Z M10 10 L10 14 L14 14 L14 10 Z" fill-rule="evenodd" fill="#12a880" stroke="#0a5443" stroke-width="0.900" stroke-linejoin="round"/></g>
<g transform="translate(0,104)"><path d="M7 5 L12 10 L17 5 L19.200 7.200 L14.200 12.200 L19.200 17.200 L17 19.400 L12 14.400 L7 19.400 L4.800 17.200 L9.800 12.200 L4.800 7.200 Z" fill="#12a880" stroke="#0a5443" stroke-width="0.900" stroke-linejoin="round"/></g>
<g transform="translate(0,130)"><path d="M8.500 5.500 L19.500 11 L18.500 13 L7.500 7.500 Z M5.500 10.500 L16.500 16 L15.500 18 L4.500 12.500 Z" fill="#12a880" stroke="#0a5443" stroke-width="0.900" stroke-linejoin="round"/></g>
<g transform="translate(0,156)"><path d="M8 15 L17.500 6 L19 7.800 L9.800 16.800 Z" fill="#12a880" stroke="#0a5443" stroke-width="0.900" stroke-linejoin="round"/><circle cx="8" cy="16" r="3.200" fill="#12a880" stroke="#0a5443" stroke-width="0.900" stroke-linejoin="round"/></g>
<g transform="translate(0,182)"><circle cx="12" cy="12" r="5" fill="none" stroke="#0a5443" stroke-width="1.200"/><circle cx="12" cy="6.500" r="2" fill="#12a880" stroke="#0a5443" stroke-width="0.900" stroke-linejoin="round"/><circle cx="12" cy="17.500" r="2" fill="#12a880" stroke="#0a5443" stroke-width="0.900" stroke-linejoin="round"/><circle cx="6.500" cy="12" r="2" fill="#12a880" stroke="#0a5443" stroke-width="0.900" stroke-linejoin="round"/><circle cx="17.500" cy="12" r="2" fill="#12a880" stroke="#0a5443" stroke-width="0.900" stroke-linejoin="round"/></g>
<g transform="translate(0,208)"><circle cx="12" cy="12" r="6.600" fill="#12a880" stroke="#0a5443" stroke-width="0.900"/><circle cx="12" cy="12" r="4.300" fill="#efeeec" stroke="#0a5443" stroke-width="0.800"/><circle cx="12" cy="12" r="3.300" fill="#12a880" stroke="#0a5443" stroke-width="0.800"/><circle cx="12" cy="12" r="1.100" fill="#0a5443"/></g>
<g transform="translate(0,234)"><circle cx="6.500" cy="12.500" r="2" fill="#12a880" stroke="#0a5443" stroke-width="0.900" stroke-linejoin="round"/><circle cx="12" cy="12.500" r="2" fill="#12a880" stroke="#0a5443" stroke-width="0.900" stroke-linejoin="round"/><circle cx="17.500" cy="12.500" r="2" fill="#12a880" stroke="#0a5443" stroke-width="0.900" stroke-linejoin="round"/></g>
<g transform="translate(0,260)"><path d="M5.500 10.500 L6.800 8.500 L17 15.500 L15.700 17.500 Z" fill="#12a880" stroke="#0a5443" stroke-width="0.900" stroke-linejoin="round"/><circle cx="15.300" cy="7.500" r="1.900" fill="#12a880" stroke="#0a5443" stroke-width="0.900" stroke-linejoin="round"/></g>
<g transform="translate(0,286)"><path d="M10.700 6 h2.600 v4.700 h4.700 v2.600 h-4.700 v4.700 h-2.600 v-4.700 h-4.700 v-2.600 h4.700 z" fill="#12a880" stroke="#0a5443" stroke-width="0.900" stroke-linejoin="round"/></g>
<g transform="translate(0,312)"><path d="M9.500 17 L9.500 9.500 L17.500 9.500 L17.500 12" fill="none" stroke="#0a5443" stroke-width="1.300"/><path d="M7 17.500 h4 M7 10 h1.500" stroke="#0a5443" stroke-width="0.800"/><text x="9.500" y="8" font-family="Liberation Sans, sans-serif" font-weight="bold" font-size="4.500" fill="#0a6a50">1.00</text><text x="0" y="0" font-family="Liberation Sans, sans-serif" font-weight="bold" font-size="4.500" fill="#0a6a50" transform="translate(8,17.500) rotate(-90)">1.00</text></g>
<g transform="translate(0,338)"><rect x="5" y="5" width="14" height="14.500" fill="#12a880" stroke="#0a5443" stroke-width="0.900" stroke-linejoin="round"/><circle cx="9.500" cy="15" r="1.600" fill="none" stroke="#0a4435" stroke-width="0.900"/></g>
</svg>
<!-- MDI tab -->
<div class="abs" style="left:283px;top:685px;width:329px;height:33px;box-sizing:border-box;border:1px solid #c3bfb8;border-top:none;border-radius:0 0 5px 5px;background:linear-gradient(#f4f3f2,#ffffff);"></div>
<div class="abs" style="left:612px;top:718px;width:689px;height:1px;background:#dedcd9;"></div>
<svg class="abs" style="left:290px;top:694px" width="16" height="14" viewBox="0 0 16 14">
 <path d="M0.500 0.500 L7.500 0.500 L7.500 3 L3.500 3 L3.500 5.500 L6 5.500 L6 8 L3.500 8 L3.500 12.500 L0.500 12.500 Z" fill="#e2231a" stroke="#8d1a10" stroke-width="0.600"/>
 <g transform="translate(9.500,8.500)"><circle r="3.400" fill="#1d3f9e"/><g stroke="#1d3f9e" stroke-width="2"><path d="M0 -5 V5 M-5 0 H5 M-3.500 -3.500 L3.500 3.500 M-3.500 3.500 L3.500 -3.500"/></g><circle r="1.600" fill="#fff"/></g>
</svg>
<div class="txt" style="left:313.500px;top:694px;font-size:14.850px;">F2-T29-ej2-hotend-witbox-hephestos : 1</div>
<svg class="abs" style="left:587px;top:695px" width="14" height="14" viewBox="0 0 14 14"><path d="M2.500 2.500 L11.500 11.500 M11.500 2.500 L2.500 11.500" stroke="#4e4c48" stroke-width="3.200" fill="none"/></svg>
<!-- status bar -->
<div class="txt" style="left:1167px;top:727px;font-size:14.700px;">167.11 x 101.65 mm</div>
<div class="abs rightedge"></div>
</div>
</body>
</html>
